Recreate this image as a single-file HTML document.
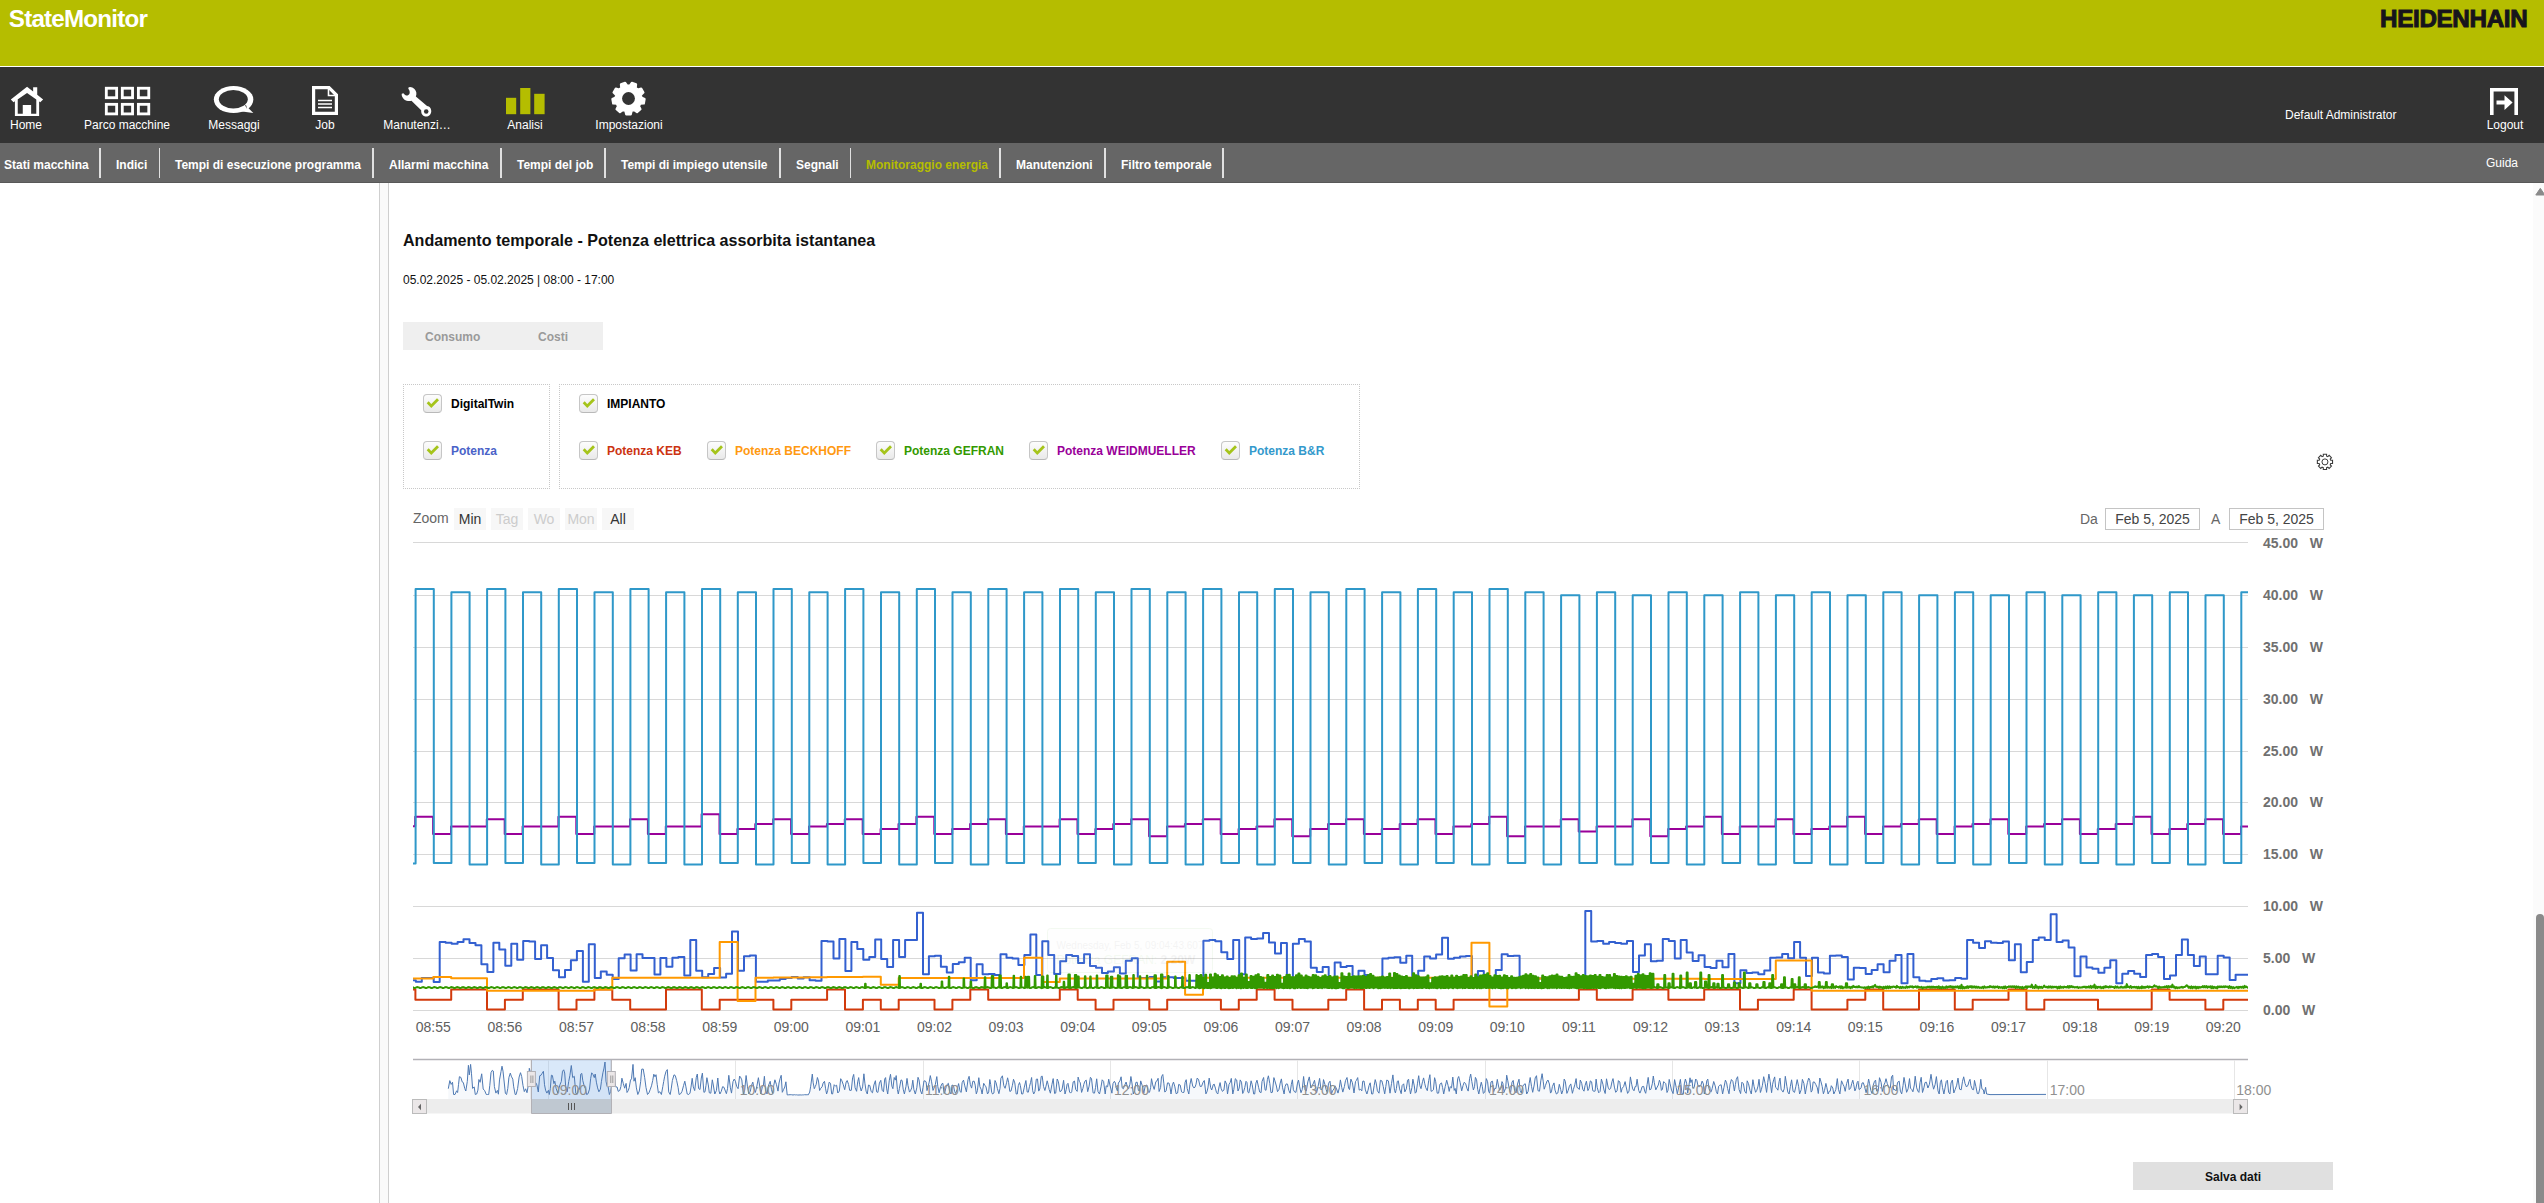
<!DOCTYPE html>
<html lang="it"><head><meta charset="utf-8"><title>StateMonitor</title>
<style>
*{box-sizing:border-box;margin:0;padding:0}
html,body{width:2544px;height:1203px;overflow:hidden;background:#fff}
body{font-family:"Liberation Sans",Arial,sans-serif;font-size:12px;color:#000;position:relative}
.abs{position:absolute}
#top{left:0;top:0;width:2544px;height:66px;background:#b5bd00}
#top .app{left:8.8px;top:5.4px;font-size:24.2px;font-weight:bold;color:#fff;line-height:28px;white-space:nowrap;letter-spacing:-0.8px}
#top .logo{right:16.7px;top:4px;font-size:24.2px;font-weight:bold;color:#17141c;line-height:30px;letter-spacing:-0.33px;white-space:nowrap;-webkit-text-stroke:1px #17141c}
#nav{left:0;top:67px;width:2544px;height:76px;background:#333}
.ni{position:absolute;top:0;height:76px;color:#fff;font-size:12px;text-align:center;white-space:nowrap}
.ni span{position:absolute;left:50%;transform:translateX(-50%);top:51px;line-height:15px}
.ni svg{position:absolute;display:block}
#sub{left:0;top:143px;width:2544px;height:40px;background:#666;border-bottom:1px solid #585858}
#sub .it{position:absolute;top:1px;height:40px;line-height:42px;color:#fff;font-weight:bold;font-size:12px;white-space:nowrap}
#sub .sep{position:absolute;top:5px;width:1.15px;height:30px;background:#e0e0e0}
#sub .on{color:#b5bd00}
#split{left:379px;top:183px;width:10px;height:1020px;background:#fafafa;border-left:1px solid #cfcfcf;border-right:1px solid #cfcfcf}
h1{position:absolute;left:403px;top:230px;font-size:16.1px;font-weight:bold;line-height:20px;white-space:nowrap;color:#111}
.dt{left:403px;top:273px;font-size:12px;line-height:15px;white-space:nowrap;color:#111}
.tabs{left:403px;top:322px;width:200px;height:28px;background:#efefef;color:#9a9a9a;font-weight:bold;font-size:12px;line-height:31px}
.tabs span{position:absolute;top:0}
.box{border:1px dotted #c8c8c8;top:384px;height:105px}
.cb{position:absolute;width:19px;height:19px;border:1px solid #c6c6c6;border-bottom-color:#b9b9b9;border-radius:4px;background:linear-gradient(#fdfdfd,#e9e9e9)}
.cb svg{position:absolute;left:0;top:0}
.lb{position:absolute;margin-top:1px;font-weight:bold;font-size:12px;line-height:15px;white-space:nowrap}
.zb{position:absolute;top:508px;width:32px;height:22px;background:#f7f7f7;font-size:14px;line-height:22px;text-align:center;color:#333}
.zb.d{color:#ccc}
.inp{position:absolute;top:508px;width:95px;height:22px;border:1px solid #c4c4c4;font-size:14px;line-height:21px;text-align:center;color:#444;background:#fff}
.save{left:2133px;top:1162px;width:200px;height:28px;background:#e0e0e0;font-weight:bold;font-size:12px;line-height:31px;text-align:center;color:#111}
#sbar{left:2533px;top:183px;width:11px;height:1020px;background:#fbfbfb}
#sthumb{left:2536px;top:914px;width:8px;height:300px;background:#8a8a8a;border-radius:4px}
</style></head><body>
<div id="top" class="abs"><div class="abs app">StateMonitor</div><div class="abs logo">HEIDENHAIN</div></div>
<div id="nav" class="abs"><div class="ni" style="left:-54px;width:160px;color:#fff"><svg width="160" height="60" viewBox="0 0 2544 954" style="left:54px;top:9px"><path d="M430 170 L172 375 L215 418 L430 270 L640 418 L686 375 L592 298 V180 H527 V248 Z" fill="#fff"/><path d="M237 395 V636 H622 V395 L577 365 V600 H495 V462 H362 V600 H282 V365 Z" fill="#fff"/></svg><span>Home</span></div><div class="ni" style="left:47px;width:160px;color:#fff"><svg width="160" height="60" viewBox="0 0 2544 954" style="left:-47px;top:9px"><rect x="1690.5" y="194.5" width="164" height="151" fill="none" stroke="#fff" stroke-width="45"/><rect x="1944.5" y="194.5" width="163" height="151" fill="none" stroke="#fff" stroke-width="45"/><rect x="2200.5" y="194.5" width="165" height="151" fill="none" stroke="#fff" stroke-width="45"/><rect x="1690.5" y="450.5" width="164" height="152" fill="none" stroke="#fff" stroke-width="45"/><rect x="1944.5" y="450.5" width="163" height="152" fill="none" stroke="#fff" stroke-width="45"/><rect x="2200.5" y="450.5" width="165" height="152" fill="none" stroke="#fff" stroke-width="45"/></svg><span>Parco macchine</span></div><div class="ni" style="left:154px;width:160px;color:#fff"><svg width="160" height="60" viewBox="0 0 2544 954" style="left:46px;top:9px"><ellipse cx="534" cy="374" rx="314" ry="216" fill="#fff"/><path d="M700 440 L848 590 L640 560 Z" fill="#fff"/><ellipse cx="530" cy="370" rx="230" ry="146" fill="#333"/><path d="M712 462 L748 522 L735 470 Z" fill="#333"/></svg><span>Messaggi</span></div><div class="ni" style="left:245px;width:160px;color:#fff"><svg width="26" height="29" viewBox="0 0 26 29" style="left:67px;top:19.200000000000003px"><path d="M1.6 1.6 H17 L24.4 9 V27.4 H1.6 Z" fill="none" stroke="#fff" stroke-width="3.2"/><path d="M16.5 1.6 V9.5 H24.4" fill="none" stroke="#fff" stroke-width="1.6"/><path d="M6 14.5 H20 M6 18 H20 M6 21.5 H20" stroke="#fff" stroke-width="1.3"/></svg><span>Job</span></div><div class="ni" style="left:337px;width:160px;color:#fff"><svg width="160" height="60" viewBox="0 0 2544 954" style="left:43px;top:9px"><path d="M450 185 C470 166 520 178 548 208 C580 240 588 290 570 325 L748 478 C790 480 818 520 815 565 C812 615 770 648 730 645 C690 642 655 610 655 560 L655 545 L500 395 C470 402 420 402 385 372 C355 345 338 310 346 283 L372 273 C395 300 420 318 445 308 C480 290 482 240 452 207 Z" fill="#fff"/><circle cx="735" cy="565" r="36" fill="#333"/></svg><span>Manutenzi&hellip;</span></div><div class="ni" style="left:445px;width:160px;color:#fff"><svg width="39" height="27" viewBox="0 0 39 27" style="left:60.80000000000001px;top:21px"><rect x="0" y="9.8" width="10.2" height="16.4" fill="#b5bd00"/><rect x="14.2" y="0" width="10.2" height="26.2" fill="#b5bd00"/><rect x="28.2" y="5.8" width="10.4" height="20.4" fill="#b5bd00"/></svg><span>Analisi</span></div><div class="ni" style="left:549px;width:160px;color:#fff"><svg width="37" height="37" viewBox="0 0 37 37" style="left:61px;top:13px"><path d="M21.62 31.02L20.74 34.44L16.26 34.44L15.38 31.02L12.85 30.09L9.97 32.15L6.54 29.27L8.06 26.08L6.72 23.75L3.19 23.48L2.41 19.06L5.63 17.60L6.10 14.94L3.57 12.47L5.81 8.59L9.22 9.54L11.29 7.81L10.94 4.28L15.15 2.75L17.15 5.67L19.85 5.67L21.85 2.75L26.06 4.28L25.71 7.81L27.78 9.54L31.19 8.59L33.43 12.47L30.90 14.94L31.37 17.60L34.59 19.06L33.81 23.48L30.28 23.75L28.94 26.08L30.46 29.27L27.03 32.15L24.15 30.09Z" fill="#fff" stroke="#fff" stroke-width="2.2" stroke-linejoin="round"/><circle cx="18.5" cy="18.5" r="6.4" fill="#333"/></svg><span>Impostazioni</span></div><div class="ni" style="left:2425px;width:160px;color:#fff"><svg width="28" height="27" viewBox="0 0 28 27" style="left:65.30000000000018px;top:21px"><path d="M1.8 27 V1.8 H26.2 V27" fill="none" stroke="#fff" stroke-width="3.6"/><path d="M6.5 12.6 H14.5 V7.2 L22.6 14.6 L14.5 22 V16.6 H6.5 Z" fill="#fff"/></svg><span>Logout</span></div><div class="abs" style="left:2285px;top:41px;color:#fff;font-size:12px;line-height:15px;white-space:nowrap">Default Administrator</div></div>
<div id="sub" class="abs"><div class="it" style="left:4px">Stati macchina</div><div class="it" style="left:116px">Indici</div><div class="it" style="left:175px">Tempi di esecuzione programma</div><div class="it" style="left:389px">Allarmi macchina</div><div class="it" style="left:517px">Tempi del job</div><div class="it" style="left:621px">Tempi di impiego utensile</div><div class="it" style="left:796px">Segnali</div><div class="it on" style="left:866px">Monitoraggio energia</div><div class="it" style="left:1016px">Manutenzioni</div><div class="it" style="left:1121px">Filtro temporale</div><div class="sep" style="left:99.45px"></div><div class="sep" style="left:158.75px"></div><div class="sep" style="left:372.45px"></div><div class="sep" style="left:500.45px"></div><div class="sep" style="left:604.45px"></div><div class="sep" style="left:779.45px"></div><div class="sep" style="left:849.95px"></div><div class="sep" style="left:999.45px"></div><div class="sep" style="left:1104.45px"></div><div class="sep" style="left:1222.45px"></div><div class="it" style="left:2486px;font-weight:normal;line-height:39px">Guida</div></div>
<div id="split" class="abs"></div>
<div id="sbar" class="abs"></div><div id="sthumb" class="abs"></div>
<h1>Andamento temporale - Potenza elettrica assorbita istantanea</h1>
<div class="abs dt">05.02.2025 - 05.02.2025 | 08:00 - 17:00</div>
<div class="abs tabs"><span style="left:22px">Consumo</span><span style="left:135px">Costi</span></div>
<div class="abs box" style="left:403px;width:147px"></div><div class="abs box" style="left:559px;width:801px"></div><div class="cb" style="left:423px;top:394px"><svg width="17" height="17" viewBox="1 1 17 17"><path d="M4.7 8.3 L8.3 12.1 L15 5.3" fill="none" stroke="#a5c41a" stroke-width="2.8" stroke-linecap="butt" stroke-linejoin="miter"/></svg></div><div class="lb" style="left:451px;top:396px;color:#000">DigitalTwin</div><div class="cb" style="left:423px;top:441px"><svg width="17" height="17" viewBox="1 1 17 17"><path d="M4.7 8.3 L8.3 12.1 L15 5.3" fill="none" stroke="#a5c41a" stroke-width="2.8" stroke-linecap="butt" stroke-linejoin="miter"/></svg></div><div class="lb" style="left:451px;top:443px;color:#4a62c8">Potenza</div><div class="cb" style="left:579px;top:394px"><svg width="17" height="17" viewBox="1 1 17 17"><path d="M4.7 8.3 L8.3 12.1 L15 5.3" fill="none" stroke="#a5c41a" stroke-width="2.8" stroke-linecap="butt" stroke-linejoin="miter"/></svg></div><div class="lb" style="left:607px;top:396px;color:#000">IMPIANTO</div><div class="cb" style="left:579px;top:441px"><svg width="17" height="17" viewBox="1 1 17 17"><path d="M4.7 8.3 L8.3 12.1 L15 5.3" fill="none" stroke="#a5c41a" stroke-width="2.8" stroke-linecap="butt" stroke-linejoin="miter"/></svg></div><div class="lb" style="left:607px;top:443px;color:#cc3311">Potenza KEB</div><div class="cb" style="left:707px;top:441px"><svg width="17" height="17" viewBox="1 1 17 17"><path d="M4.7 8.3 L8.3 12.1 L15 5.3" fill="none" stroke="#a5c41a" stroke-width="2.8" stroke-linecap="butt" stroke-linejoin="miter"/></svg></div><div class="lb" style="left:735px;top:443px;color:#ff9911">Potenza BECKHOFF</div><div class="cb" style="left:876px;top:441px"><svg width="17" height="17" viewBox="1 1 17 17"><path d="M4.7 8.3 L8.3 12.1 L15 5.3" fill="none" stroke="#a5c41a" stroke-width="2.8" stroke-linecap="butt" stroke-linejoin="miter"/></svg></div><div class="lb" style="left:904px;top:443px;color:#339900">Potenza GEFRAN</div><div class="cb" style="left:1029px;top:441px"><svg width="17" height="17" viewBox="1 1 17 17"><path d="M4.7 8.3 L8.3 12.1 L15 5.3" fill="none" stroke="#a5c41a" stroke-width="2.8" stroke-linecap="butt" stroke-linejoin="miter"/></svg></div><div class="lb" style="left:1057px;top:443px;color:#990099">Potenza WEIDMUELLER</div><div class="cb" style="left:1221px;top:441px"><svg width="17" height="17" viewBox="1 1 17 17"><path d="M4.7 8.3 L8.3 12.1 L15 5.3" fill="none" stroke="#a5c41a" stroke-width="2.8" stroke-linecap="butt" stroke-linejoin="miter"/></svg></div><div class="lb" style="left:1249px;top:443px;color:#3399cc">Potenza B&amp;R</div>
<div class="abs" style="left:413px;top:508px;font-size:14px;line-height:21px;color:#666">Zoom</div><div class="zb" style="left:454px">Min</div><div class="zb d" style="left:491px">Tag</div><div class="zb d" style="left:528px">Wo</div><div class="zb d" style="left:565px">Mon</div><div class="zb" style="left:602px">All</div><div class="abs" style="left:2080px;top:508px;font-size:14px;line-height:22px;color:#666">Da</div><div class="inp" style="left:2105px">Feb 5, 2025</div><div class="abs" style="left:2211px;top:508px;font-size:14px;line-height:22px;color:#666">A</div><div class="inp" style="left:2229px">Feb 5, 2025</div>
<svg class="abs" style="left:0;top:0" width="2544" height="1203" viewBox="0 0 2544 1203" font-family="Liberation Sans, Arial, sans-serif">
<path d="M413 1010.5H2248" stroke="#d8d8d8" stroke-width="1" fill="none"/>
<text x="2263" y="1014.9" font-size="14" font-weight="bold" fill="#707070" xml:space="preserve">0.00   W</text>
<path d="M413 958.5H2248" stroke="#d8d8d8" stroke-width="1" fill="none"/>
<text x="2263" y="962.9" font-size="14" font-weight="bold" fill="#707070" xml:space="preserve">5.00   W</text>
<path d="M413 906.5H2248" stroke="#d8d8d8" stroke-width="1" fill="none"/>
<text x="2263" y="910.9" font-size="14" font-weight="bold" fill="#707070" xml:space="preserve">10.00   W</text>
<path d="M413 854.5H2248" stroke="#d8d8d8" stroke-width="1" fill="none"/>
<text x="2263" y="858.9" font-size="14" font-weight="bold" fill="#707070" xml:space="preserve">15.00   W</text>
<path d="M413 802.5H2248" stroke="#d8d8d8" stroke-width="1" fill="none"/>
<text x="2263" y="806.9" font-size="14" font-weight="bold" fill="#707070" xml:space="preserve">20.00   W</text>
<path d="M413 751.5H2248" stroke="#d8d8d8" stroke-width="1" fill="none"/>
<text x="2263" y="755.9" font-size="14" font-weight="bold" fill="#707070" xml:space="preserve">25.00   W</text>
<path d="M413 699.5H2248" stroke="#d8d8d8" stroke-width="1" fill="none"/>
<text x="2263" y="703.9" font-size="14" font-weight="bold" fill="#707070" xml:space="preserve">30.00   W</text>
<path d="M413 647.5H2248" stroke="#d8d8d8" stroke-width="1" fill="none"/>
<text x="2263" y="651.9" font-size="14" font-weight="bold" fill="#707070" xml:space="preserve">35.00   W</text>
<path d="M413 595.5H2248" stroke="#d8d8d8" stroke-width="1" fill="none"/>
<text x="2263" y="599.9" font-size="14" font-weight="bold" fill="#707070" xml:space="preserve">40.00   W</text>
<path d="M413 542.5H2248" stroke="#d8d8d8" stroke-width="1" fill="none"/>
<text x="2263" y="547.5" font-size="14" font-weight="bold" fill="#707070" xml:space="preserve">45.00   W</text>
<text x="433.3" y="1032" font-size="14" fill="#606060" text-anchor="middle">08:55</text>
<text x="504.9" y="1032" font-size="14" fill="#606060" text-anchor="middle">08:56</text>
<text x="576.5" y="1032" font-size="14" fill="#606060" text-anchor="middle">08:57</text>
<text x="648.1" y="1032" font-size="14" fill="#606060" text-anchor="middle">08:58</text>
<text x="719.7" y="1032" font-size="14" fill="#606060" text-anchor="middle">08:59</text>
<text x="791.3" y="1032" font-size="14" fill="#606060" text-anchor="middle">09:00</text>
<text x="862.9" y="1032" font-size="14" fill="#606060" text-anchor="middle">09:01</text>
<text x="934.5" y="1032" font-size="14" fill="#606060" text-anchor="middle">09:02</text>
<text x="1006.1" y="1032" font-size="14" fill="#606060" text-anchor="middle">09:03</text>
<text x="1077.7" y="1032" font-size="14" fill="#606060" text-anchor="middle">09:04</text>
<text x="1149.3" y="1032" font-size="14" fill="#606060" text-anchor="middle">09:05</text>
<text x="1220.9" y="1032" font-size="14" fill="#606060" text-anchor="middle">09:06</text>
<text x="1292.5" y="1032" font-size="14" fill="#606060" text-anchor="middle">09:07</text>
<text x="1364.1" y="1032" font-size="14" fill="#606060" text-anchor="middle">09:08</text>
<text x="1435.7" y="1032" font-size="14" fill="#606060" text-anchor="middle">09:09</text>
<text x="1507.3" y="1032" font-size="14" fill="#606060" text-anchor="middle">09:10</text>
<text x="1578.9" y="1032" font-size="14" fill="#606060" text-anchor="middle">09:11</text>
<text x="1650.5" y="1032" font-size="14" fill="#606060" text-anchor="middle">09:12</text>
<text x="1722.1" y="1032" font-size="14" fill="#606060" text-anchor="middle">09:13</text>
<text x="1793.7" y="1032" font-size="14" fill="#606060" text-anchor="middle">09:14</text>
<text x="1865.3" y="1032" font-size="14" fill="#606060" text-anchor="middle">09:15</text>
<text x="1936.9" y="1032" font-size="14" fill="#606060" text-anchor="middle">09:16</text>
<text x="2008.5" y="1032" font-size="14" fill="#606060" text-anchor="middle">09:17</text>
<text x="2080.1" y="1032" font-size="14" fill="#606060" text-anchor="middle">09:18</text>
<text x="2151.7" y="1032" font-size="14" fill="#606060" text-anchor="middle">09:19</text>
<text x="2223.3" y="1032" font-size="14" fill="#606060" text-anchor="middle">09:20</text>
<clipPath id="cp"><rect x="413" y="540" width="1835" height="475"/></clipPath>
<g clip-path="url(#cp)" fill="none" stroke-linejoin="round" stroke-linecap="round">
<path d="M413.0 980.2H415.8 V981.8H421.8 V977.9H427.7 V977.9H433.7 V982.0H439.7 V941.9H445.6 V942.7H451.6 V943.7H457.6 V941.9H463.5 V939.3H469.5 V943.1H475.5 V945.2H481.4 V964.3H487.4 V972.0H493.4 V942.7H499.3 V949.6H505.3 V965.8H511.3 V943.7H517.2 V959.8H523.2 V940.9H529.2 V941.5H535.1 V959.0H541.1 V945.2H547.1 V958.0H553.0 V970.2H559.0 V977.3H565.0 V970.0H570.9 V960.2H576.9 V951.1H582.9 V981.8H588.8 V944.2H594.8 V978.1H600.8 V971.4H606.7 V974.7H612.7 V979.0H618.7 V958.2H624.6 V954.6H630.6 V970.5H636.6 V954.3H642.5 V958.0H648.5 V958.0H654.5 V974.6H660.4 V958.0H666.4 V966.7H672.4 V957.8H678.3 V957.0H684.3 V975.5H690.3 V940.1H696.2 V970.8H702.2 V977.3H708.2 V974.0H714.1 V968.1H720.1 V977.5H726.1 V973.7H732.0 V931.5H738.0 V970.8H744.0 V956.3H749.9 V955.5H755.9 V981.8H761.9 V981.8H767.8 V980.6H773.8 V980.6H779.8 V979.0H785.7 V977.9H791.7 V977.0H797.7 V978.5H803.6 V977.3H809.6 V980.2H815.6 V980.8H821.5 V940.9H827.5 V941.5H833.5 V958.4H839.4 V938.9H845.4 V971.1H851.4 V942.1H857.3 V949.0H863.3 V959.8H869.3 V957.0H875.2 V939.5H881.2 V959.0H887.2 V966.9H893.1 V940.1H899.1 V957.0H905.1 V940.1H911.0 V940.1H917.0 V912.8H923.0 V974.3H928.9 V956.3H934.9 V955.7H940.9 V966.7H946.8 V972.6H952.8 V964.1H958.8 V962.2H964.7 V957.8H970.7 V980.2H976.7 V964.3H982.6 V974.3H988.6 V974.0H994.6 V975.1H1000.5 V954.3H1006.5 V957.8H1012.5 V958.4H1018.4 V964.9H1024.4 V954.9H1030.4 V934.6H1036.3 V974.9H1042.3 V941.3H1048.3 V954.9H1054.2 V974.0H1060.2 V961.3H1066.2 V954.9H1072.1 V956.0H1078.1 V962.9H1084.1 V954.3H1090.0 V966.1H1096.0 V967.8H1102.0 V973.1H1107.9 V971.6H1113.9 V967.2H1119.9 V973.5H1125.8 V960.8H1131.8 V958.2H1137.8 V977.9H1143.7 V977.9H1149.7 V977.0H1155.7 V981.4H1161.6 V977.3H1167.6 V977.3H1173.6 V977.9H1179.5 V977.9H1185.5 V980.8H1191.5 V980.8H1197.4 V979.6H1203.4 V940.7H1209.4 V940.1H1215.3 V941.3H1221.3 V952.3H1227.3 V959.0H1233.2 V940.1H1239.2 V974.3H1245.2 V937.4H1251.1 V938.9H1257.1 V938.6H1263.1 V933.0H1269.0 V942.5H1275.0 V953.4H1281.0 V943.1H1286.9 V978.5H1292.9 V943.7H1298.9 V938.9H1304.8 V941.5H1310.8 V967.8H1316.8 V972.0H1322.7 V966.9H1328.7 V978.5H1334.7 V962.5H1340.6 V966.9H1346.6 V966.1H1352.6 V978.5H1358.5 V970.8H1364.5 V974.9H1370.5 V978.5H1376.4 V978.5H1382.4 V958.4H1388.4 V957.8H1394.3 V957.2H1400.3 V962.8H1406.3 V955.7H1412.2 V978.5H1418.2 V970.8H1424.2 V956.6H1430.1 V958.6H1436.1 V954.5H1442.1 V937.8H1448.0 V958.8H1454.0 V957.8H1460.0 V956.6H1465.9 V956.0H1471.9 V978.5H1477.9 V971.1H1483.8 V978.5H1489.8 V978.5H1495.8 V970.0H1501.7 V954.3H1507.7 V956.0H1513.7 V955.8H1519.6 V978.5H1525.6 V978.5H1531.6 V978.5H1537.5 V978.5H1543.5 V978.5H1549.5 V978.5H1555.4 V978.5H1561.4 V978.5H1567.4 V978.5H1573.3 V978.5H1579.3 V978.5H1585.3 V911.0H1591.2 V941.5H1597.2 V941.1H1603.2 V943.7H1609.1 V942.1H1615.1 V943.1H1621.1 V943.7H1627.0 V940.9H1633.0 V972.0H1639.0 V955.5H1644.9 V944.2H1650.9 V961.3H1656.9 V960.8H1662.8 V938.9H1668.8 V940.9H1674.8 V958.4H1680.7 V940.1H1686.7 V952.5H1692.7 V961.1H1698.6 V955.2H1704.6 V967.0H1710.6 V968.1H1716.5 V960.8H1722.5 V967.2H1728.5 V953.9H1734.4 V983.2H1740.4 V970.2H1746.4 V973.1H1752.3 V972.6H1758.3 V974.3H1764.3 V970.5H1770.2 V957.8H1776.2 V957.6H1782.2 V954.0H1788.1 V958.2H1794.1 V942.1H1800.1 V957.8H1806.0 V976.1H1812.0 V957.8H1818.0 V972.6H1823.9 V973.5H1829.9 V955.7H1835.9 V955.5H1841.8 V956.9H1847.8 V979.4H1853.8 V967.8H1859.7 V968.1H1865.7 V974.0H1871.7 V970.0H1877.6 V964.3H1883.6 V972.3H1889.6 V960.8H1895.5 V955.1H1901.5 V983.2H1907.5 V954.0H1913.4 V977.3H1919.4 V980.8H1925.4 V981.2H1931.3 V979.0H1937.3 V978.2H1943.3 V980.6H1949.2 V980.2H1955.2 V977.9H1961.2 V978.8H1967.1 V940.1H1973.1 V942.7H1979.1 V948.0H1985.0 V941.3H1991.0 V942.7H1997.0 V943.1H2002.9 V941.5H2008.9 V960.2H2014.9 V944.2H2020.8 V972.2H2026.8 V961.9H2032.8 V940.1H2038.7 V937.5H2044.7 V939.9H2050.7 V914.2H2056.6 V941.9H2062.6 V940.4H2068.6 V947.4H2074.5 V976.3H2080.5 V956.4H2086.5 V967.5H2092.4 V968.7H2098.4 V972.8H2104.4 V967.8H2110.3 V960.2H2116.3 V983.2H2122.3 V973.7H2128.2 V971.0H2134.2 V973.7H2140.2 V976.9H2146.1 V954.9H2152.1 V954.0H2158.1 V956.9H2164.0 V979.0H2170.0 V975.5H2176.0 V954.9H2181.9 V939.5H2187.9 V954.9H2193.9 V966.1H2199.8 V956.6H2205.8 V974.3H2211.8 V974.3H2217.7 V955.8H2223.7 V957.5H2229.7 V979.9H2235.6 V974.7H2241.6 V974.7H2247.6 V974.7H2248.0" stroke="#3360d0" stroke-width="2"/>
<path d="M413.0 989.6H415.4 V999.7H433.3 V999.7H451.2 V989.6H469.1 V989.6H487.0 V1009.5H504.9 V999.7H522.8 V989.6H540.7 V989.6H558.6 V1009.5H576.5 V999.7H594.4 V989.6H612.3 V999.7H630.2 V1009.5H648.1 V1009.5H666.0 V989.6H683.9 V989.6H701.8 V1009.5H719.7 V999.7H737.6 V999.7H755.5 V999.7H773.4 V1009.5H791.3 V999.7H809.2 V999.7H827.1 V989.6H845.0 V1009.5H862.9 V999.7H880.8 V1009.5H898.7 V999.7H916.6 V999.7H934.5 V1009.5H952.4 V999.7H970.3 V989.6H988.2 V999.7H1006.1 V999.7H1024.0 V999.7H1041.9 V999.7H1059.8 V989.6H1077.7 V999.7H1095.6 V1009.5H1113.5 V999.7H1131.4 V999.7H1149.3 V1009.5H1167.2 V999.7H1185.1 V999.7H1203.0 V999.7H1220.9 V1009.5H1238.8 V999.7H1256.7 V989.6H1274.6 V999.7H1292.5 V1009.5H1310.4 V1009.5H1328.3 V999.7H1346.2 V989.6H1364.1 V1009.5H1382.0 V999.7H1399.9 V1009.5H1417.8 V999.7H1435.7 V1009.5H1453.6 V999.7H1471.5 V999.7H1489.4 V999.7H1507.3 V999.7H1525.2 V999.7H1543.1 V999.7H1561.0 V999.7H1578.9 V989.6H1596.8 V999.7H1614.7 V999.7H1632.6 V989.6H1650.5 V989.6H1668.4 V999.7H1686.3 V999.7H1704.2 V989.6H1722.1 V989.6H1740.0 V1009.5H1757.9 V999.7H1775.8 V999.7H1793.7 V989.6H1811.6 V1009.5H1829.5 V1009.5H1847.4 V999.7H1865.3 V989.6H1883.2 V1009.5H1901.1 V1009.5H1919.0 V989.6H1936.9 V989.6H1954.8 V1009.5H1972.7 V999.7H1990.6 V999.7H2008.5 V989.6H2026.4 V1009.5H2044.3 V999.7H2062.2 V999.7H2080.1 V999.7H2098.0 V1009.5H2115.9 V1009.5H2133.8 V1009.5H2151.7 V989.6H2169.6 V999.7H2187.5 V999.7H2205.4 V1009.5H2223.3 V999.7H2241.2 V999.7H2248.0" stroke="#d23a0c" stroke-width="2"/>
<path d="M413.0 978.6H415.4 V978.6H433.3 V977.1H451.2 V978.2H469.1 V978.2H487.0 V990.8H504.9 V990.8H522.8 V990.8H540.7 V990.8H558.6 V990.8H576.5 V990.8H594.4 V989.5H612.3 V977.8H630.2 V977.8H648.1 V977.8H666.0 V977.8H683.9 V977.8H701.8 V977.8H719.7 V941.9H737.6 V1000.9H755.5 V977.8H773.4 V977.6H791.3 V977.4H809.2 V977.3H827.1 V977.1H845.0 V976.9H862.9 V976.7H880.8 V984.7H898.7 V978.1H916.6 V978.1H934.5 V978.1H952.4 V978.1H970.3 V978.1H988.2 V978.1H1006.1 V978.1H1024.0 V957.8H1041.9 V982.0H1059.8 V978.4H1077.7 V978.4H1095.6 V978.4H1113.5 V978.4H1131.4 V978.4H1149.3 V978.4H1167.2 V961.7H1185.1 V994.7H1203.0 V977.8H1220.9 V977.8H1238.8 V977.8H1256.7 V977.8H1274.6 V977.8H1292.5 V977.8H1310.4 V977.8H1328.3 V977.8H1346.2 V977.8H1364.1 V977.8H1382.0 V977.8H1399.9 V977.8H1417.8 V977.8H1435.7 V977.8H1453.6 V977.8H1471.5 V942.8H1489.4 V1006.6H1507.3 V978.3H1525.2 V978.4H1543.1 V978.4H1561.0 V978.5H1578.9 V978.5H1596.8 V978.6H1614.7 V978.6H1632.6 V978.7H1650.5 V978.7H1668.4 V978.8H1686.3 V978.8H1704.2 V978.9H1722.1 V979.0H1740.0 V979.0H1757.9 V979.1H1775.8 V960.5H1793.7 V960.5H1811.6 V990.8H1829.5 V990.8H1847.4 V990.8H1865.3 V990.8H1883.2 V990.8H1901.1 V990.8H1919.0 V990.8H1936.9 V990.8H1954.8 V990.8H1972.7 V990.8H1990.6 V990.8H2008.5 V990.8H2026.4 V990.8H2044.3 V990.8H2062.2 V990.8H2080.1 V990.8H2098.0 V990.8H2115.9 V990.8H2133.8 V990.8H2151.7 V990.8H2169.6 V990.8H2187.5 V990.8H2205.4 V990.8H2223.3 V990.8H2241.2 V990.8H2248.0" stroke="#ff9900" stroke-width="2"/>
<path d="M413.0 987.4L413.9 987.9L414.9 988.1L415.8 987.7L416.8 987.2L417.7 987.1L418.7 987.4L419.6 987.9L420.6 988.1L421.5 987.7L422.5 987.2L423.4 987.1L424.4 987.4L425.3 987.9L426.3 988.1L427.2 987.7L428.2 987.2L429.1 987.1L430.1 987.4L431.0 987.9L432.0 988.1L432.9 987.7L433.9 987.2L434.8 987.1L435.8 987.4L436.7 987.9L437.7 988.1L438.6 987.7L439.6 987.2L440.5 987.1L441.5 987.4L442.4 987.9L443.4 988.1L444.3 987.7L445.3 987.2L446.2 987.1L447.2 987.4L448.1 987.9L449.1 988.1L450.0 987.7L451.0 987.2L451.9 987.1L452.9 987.4L453.8 987.9L454.8 988.1L455.7 987.7L456.7 987.2L457.6 987.1L458.6 987.4L459.5 987.9L460.5 988.1L461.4 987.7L462.4 987.2L463.3 987.1L464.3 987.4L465.2 987.9L466.2 988.1L467.1 987.7L468.1 987.2L469.0 987.1L470.0 987.4L470.9 987.9L471.9 988.1L472.8 987.7L473.8 987.2L474.7 987.1L475.7 987.4L476.6 987.9L477.6 988.1L478.5 987.7L479.5 987.2L480.4 987.1L481.4 987.4L482.3 987.9L483.3 988.1L484.2 987.7L485.2 987.2L486.1 987.1L487.1 987.4L488.0 987.9L489.0 988.1L489.9 987.7L490.9 987.2L491.8 987.1L492.8 987.4L493.7 987.9L494.7 988.1L495.6 987.7L496.6 987.2L497.5 987.1L498.5 987.4L499.4 987.9L500.4 988.1L501.3 987.7L502.3 987.2L503.2 987.1L504.2 987.4L505.1 987.9L506.1 988.1L507.0 987.7L508.0 987.2L508.9 987.1L509.9 987.4L510.8 987.9L511.8 988.1L512.7 987.7L513.7 987.2L514.6 987.1L515.6 987.4L516.5 987.9L517.5 988.1L518.4 987.7L519.4 987.2L520.3 987.1L521.3 987.4L522.2 987.9L523.2 988.1L524.1 987.7L525.1 987.2L526.0 987.1L527.0 987.4L527.9 987.9L528.9 988.1L529.8 987.7L530.8 987.2L531.7 987.1L532.7 987.4L533.6 987.9L534.6 988.1L535.5 987.7L536.5 987.2L537.5 987.1L538.4 987.4L539.4 987.9L540.3 988.1L541.3 987.7L542.2 987.2L543.2 987.1L544.1 987.4L545.1 987.9L546.0 988.1L547.0 987.7L547.9 987.2L548.9 987.1L549.8 987.4L550.8 987.9L551.7 988.1L552.7 987.7L553.6 987.2L554.6 987.1L555.5 987.4L556.5 987.9L557.4 988.1L558.4 987.7L559.3 987.2L560.3 987.1L561.2 987.4L562.2 987.9L563.1 988.1L564.1 987.7L565.0 987.2L566.0 987.1L566.9 987.4L567.9 987.9L568.8 988.1L569.8 987.7L570.7 987.2L571.7 987.1L572.6 987.4L573.6 987.9L574.5 988.1L575.5 987.7L576.4 987.2L577.4 987.1L578.3 987.4L579.3 987.9L580.2 988.1L581.2 987.7L582.1 987.2L583.1 987.1L584.0 987.4L585.0 987.9L585.9 988.1L586.9 987.7L587.8 987.2L588.8 987.1L589.7 987.4L590.7 987.9L591.6 988.1L592.6 987.7L593.5 987.2L594.5 987.1L595.4 987.4L596.4 987.9L597.3 988.1L598.3 987.7L599.2 987.2L600.2 987.1L601.1 987.4L602.1 987.9L603.0 988.1L604.0 987.7L604.9 987.2L605.9 987.1L606.8 987.4L607.8 987.9L608.7 988.1L609.7 987.7L610.6 987.2L611.6 987.1L612.5 987.4L613.5 987.9L614.4 988.1L615.4 987.7L616.3 987.2L617.3 987.1L618.2 987.4L619.2 987.9L620.1 988.1L621.1 987.7L622.0 987.2L623.0 987.1L623.9 987.4L624.9 987.9L625.8 988.1L626.8 987.7L627.7 987.2L628.7 987.1L629.6 987.4L630.6 987.9L631.5 988.1L632.5 987.7L633.4 987.2L634.4 987.1L635.3 987.4L636.3 987.9L637.2 988.1L638.2 987.7L639.1 987.2L640.1 987.1L641.0 987.4L642.0 987.9L642.9 988.1L643.9 987.7L644.8 987.2L645.8 987.1L646.7 987.4L647.7 987.9L648.6 988.1L649.6 987.7L650.5 987.2L651.5 987.1L652.4 987.4L653.4 987.9L654.3 988.1L655.3 987.7L656.2 987.2L657.2 987.1L658.1 987.4L659.1 987.9L660.0 988.1L661.0 987.7L661.9 987.2L662.9 987.1L663.8 987.4L664.8 987.9L665.7 988.1L666.7 987.7L667.6 987.2L668.6 987.1L669.5 987.4L670.5 987.9L671.4 988.1L672.4 987.7L673.3 987.2L674.3 987.1L675.2 987.4L676.2 987.9L677.1 988.1L678.1 987.7L679.0 987.2L680.0 987.1L680.9 987.4L681.9 987.9L682.8 988.1L683.8 987.7L684.7 987.2L685.7 987.1L686.6 987.4L687.6 987.9L688.5 988.1L689.5 987.7L690.4 987.2L691.4 987.1L692.3 987.4L693.3 987.9L694.2 988.1L695.2 987.7L696.1 987.2L697.1 987.1L698.0 987.4L699.0 987.9L699.9 988.1L700.9 987.7L701.8 987.2L702.8 987.1L703.7 987.4L704.7 987.9L705.6 988.1L706.6 987.7L707.5 987.2L708.5 987.1L709.4 987.4L710.4 987.9L711.3 988.1L712.3 987.7L713.2 987.2L714.2 987.1L715.1 987.4L716.1 987.9L717.0 988.1L718.0 987.7L718.9 987.2L719.9 987.1L720.8 987.4L721.8 987.9L722.7 988.1L723.7 987.7L724.6 987.2L725.6 987.1L726.5 987.4L727.5 987.9L728.4 988.1L729.4 987.7L730.3 987.2L731.3 987.1L732.2 987.4L733.2 987.9L734.1 988.1L735.1 987.7L736.0 987.2L737.0 987.1L737.9 987.4L738.9 987.9L739.8 988.1L740.8 987.7L741.7 987.2L742.7 987.1L743.6 987.4L744.6 987.9L745.5 988.1L746.5 987.7L747.4 987.2L748.4 987.1L749.3 987.4L750.3 987.9L751.2 988.1L752.2 987.7L753.1 987.2L754.1 987.1L755.0 987.4L756.0 987.9L756.9 988.1L757.9 987.7L758.8 987.2L759.8 987.1L760.7 987.4L761.7 987.9L762.6 988.1L763.6 987.7L764.5 987.2L765.5 987.1L766.4 987.4L767.4 987.9L768.3 988.1L769.3 987.7L770.2 987.2L771.2 987.1L772.1 987.4L773.1 987.9L774.0 988.1L775.0 987.7L775.9 987.2L776.9 987.1L777.8 987.4L778.8 987.9L779.7 988.1L780.7 987.7L781.6 987.2L782.6 987.1L783.5 987.4L784.5 987.9L785.4 988.1L786.4 987.7L787.3 987.2L788.3 987.1L789.2 987.4L790.2 987.9L791.1 988.1L792.1 987.7L793.0 987.2L794.0 987.1L794.9 987.4L795.9 987.9L796.8 988.1L797.8 987.7L798.7 987.2L799.7 987.1L800.6 987.4L801.6 987.9L802.5 988.1L803.5 987.7L804.4 987.2L805.4 987.1L806.3 987.4L807.3 987.9L808.2 988.1L809.2 987.7L810.1 987.2L811.1 987.1L812.0 987.4L813.0 987.9L813.9 988.1L814.9 987.7L815.8 987.2L816.8 987.1L817.7 987.4L818.7 987.9L819.6 988.1L820.6 987.7L821.5 987.2L822.5 987.1L823.4 987.4L824.4 987.9L825.3 988.1L826.3 987.7L827.2 987.2L828.2 987.1L829.1 987.4L830.1 987.9L831.0 988.1L832.0 987.7L832.9 987.2L833.9 987.1L834.8 987.4L835.8 987.9L836.7 988.1L837.7 987.7L838.6 987.2L839.6 987.1L840.5 987.4L841.5 987.9L842.4 988.1L843.4 987.7L844.3 987.2L845.3 987.1L846.2 987.4L847.2 987.9L848.1 988.1L849.1 987.7L850.0 987.2L851.0 987.1L851.9 987.4L852.9 987.9L853.8 988.1L854.8 987.7L855.7 987.2L856.7 987.1L857.6 987.4L858.6 987.9L859.5 988.1L860.5 987.7L861.4 987.2L862.4 987.1L863.3 987.4L864.3 987.9L864.9 987.6L865.1 983.7L865.6 983.7L865.9 987.6L865.2 988.1L866.2 987.7L867.1 987.2L868.1 987.1L869.0 987.4L870.0 987.9L870.9 988.1L871.9 987.7L872.8 987.2L873.8 987.1L874.7 987.4L875.7 987.9L876.6 988.1L877.6 987.7L878.5 987.2L879.5 987.1L880.4 987.4L881.4 987.9L882.3 988.1L883.3 987.7L884.2 987.2L885.2 987.1L886.1 987.4L887.1 987.9L888.0 988.1L889.0 987.7L889.9 987.2L890.9 987.1L891.8 987.4L892.8 987.9L893.7 988.1L894.7 987.7L895.6 987.2L896.6 987.1L897.5 987.4L898.5 987.9L899.0 987.6L899.3 976.0L899.8 976.0L900.0 987.6L899.4 988.1L900.4 987.7L901.3 987.2L902.3 987.1L903.2 987.4L904.2 987.9L905.1 988.1L906.1 987.7L907.0 987.2L908.0 987.1L908.9 987.4L909.9 987.9L910.8 988.1L911.8 987.7L912.7 987.2L913.7 987.1L914.6 987.4L915.6 987.9L916.5 988.1L917.5 987.7L918.4 987.2L919.4 987.1L920.3 987.4L920.2 987.6L920.5 983.7L921.0 983.7L921.2 987.6L921.3 987.9L922.2 988.1L923.2 987.7L924.1 987.2L925.1 987.1L926.0 987.4L927.0 987.9L927.9 988.1L928.9 987.7L929.8 987.2L930.8 987.1L931.7 987.4L932.7 987.9L933.6 988.1L934.6 987.7L935.5 987.2L936.5 987.1L937.4 987.4L938.4 987.9L939.3 988.1L940.3 987.7L941.2 987.2L941.5 987.6L941.7 981.4L942.2 981.4L942.5 987.6L942.2 987.1L943.1 987.4L944.1 987.9L945.0 988.1L946.0 987.7L946.9 987.2L947.9 987.1L948.5 987.6L948.8 976.7L949.3 976.7L949.5 987.6L948.8 987.4L949.8 987.9L950.7 988.1L951.7 987.7L952.6 987.2L953.6 987.1L954.5 987.4L955.5 987.9L956.4 988.1L957.4 987.7L958.3 987.2L959.3 987.1L960.2 987.4L961.2 987.9L962.1 988.1L963.1 987.7L963.4 987.6L963.6 978.4L964.1 978.4L964.4 987.6L964.0 987.2L965.0 987.1L965.9 987.4L966.9 987.9L967.8 988.1L968.8 987.7L969.7 987.2L970.4 987.6L970.6 981.4L971.1 981.4L971.4 987.6L970.7 987.1L971.6 987.4L972.6 987.9L973.5 988.1L974.5 987.7L975.4 987.2L976.4 987.1L977.3 987.4L978.3 987.9L979.2 988.1L980.2 987.7L981.1 987.2L982.1 987.1L983.0 987.4L984.0 987.9L984.5 987.6L984.8 977.3L985.3 977.3L985.5 987.6L984.9 988.1L985.9 987.7L986.8 987.2L987.8 987.1L988.7 987.4L989.7 987.9L990.6 988.1L991.6 987.7L991.5 987.6L991.8 976.1L993.2 976.1L993.4 987.6L992.5 987.2L993.5 987.1L994.4 987.4L995.4 987.9L996.3 988.1L997.3 987.7L998.2 987.2L999.2 987.1L999.2 987.6L999.4 975.4L1000.8 975.4L1001.1 987.6L1000.1 987.4L1001.1 987.9L1002.0 988.1L1003.0 987.7L1003.9 987.2L1004.9 987.1L1005.8 987.4L1006.3 987.6L1006.5 983.3L1007.0 983.3L1007.3 987.6L1006.8 987.9L1007.7 988.1L1008.7 987.7L1009.6 987.2L1010.6 987.1L1011.5 987.4L1012.5 987.9L1013.4 988.1L1013.3 987.6L1013.6 975.7L1014.1 975.7L1014.3 987.6L1014.4 987.7L1015.3 987.2L1016.3 987.1L1017.2 987.4L1018.2 987.9L1019.1 988.1L1020.1 987.7L1020.4 987.6L1020.7 976.7L1021.2 976.7L1021.4 987.6L1021.0 987.2L1022.0 987.1L1022.9 987.4L1023.9 987.9L1024.8 988.1L1025.1 987.6L1025.4 976.8L1025.9 976.8L1026.1 987.6L1025.8 987.7L1026.7 987.2L1027.7 987.1L1027.5 987.6L1027.7 976.7L1029.1 976.7L1029.4 987.6L1028.6 987.4L1029.6 987.9L1030.5 988.1L1031.5 987.7L1032.4 987.2L1033.4 987.1L1034.3 987.4L1034.6 987.6L1034.8 975.9L1035.3 975.9L1035.6 987.6L1035.3 987.9L1036.2 988.1L1037.2 987.7L1038.1 987.2L1039.1 987.1L1040.0 987.4L1041.0 987.9L1041.6 987.6L1041.9 976.6L1043.3 976.6L1043.5 987.6L1041.9 988.1L1042.9 987.7L1043.8 987.2L1044.8 987.1L1045.7 987.4L1046.7 987.9L1046.9 987.6L1047.2 975.4L1047.7 975.4L1047.9 987.6L1047.6 988.1L1048.6 987.7L1049.5 987.2L1050.5 987.1L1051.4 987.4L1052.4 987.9L1053.3 988.1L1054.3 987.7L1055.2 987.2L1055.8 987.6L1056.0 975.6L1056.5 975.6L1056.8 987.6L1056.2 987.1L1057.1 987.4L1058.1 987.9L1059.0 988.1L1060.0 987.7L1060.9 987.2L1061.9 987.1L1062.8 987.4L1063.5 987.6L1063.7 981.8L1064.2 981.8L1064.5 987.6L1063.8 987.9L1064.7 988.1L1065.7 987.7L1066.6 987.2L1067.6 987.1L1068.2 987.6L1068.4 974.6L1069.8 974.6L1070.1 987.6L1068.5 987.4L1069.5 987.9L1070.4 988.1L1071.4 987.7L1072.3 987.2L1073.3 987.1L1074.2 987.4L1074.7 987.6L1074.9 974.9L1076.3 974.9L1076.6 987.6L1075.2 987.9L1076.1 988.1L1077.1 987.7L1077.0 987.6L1077.3 976.5L1078.7 976.5L1078.9 987.6L1078.0 987.2L1079.0 987.1L1079.9 987.4L1080.9 987.9L1081.8 988.1L1082.8 987.7L1083.7 987.2L1084.7 987.1L1084.7 987.6L1084.9 976.2L1085.4 976.2L1085.7 987.6L1085.6 987.4L1086.6 987.9L1087.5 988.1L1088.5 987.7L1089.4 987.2L1090.0 987.6L1090.2 976.5L1090.7 976.5L1091.0 987.6L1090.4 987.1L1091.3 987.4L1092.3 987.9L1093.2 988.1L1094.2 987.7L1095.1 987.2L1096.1 987.1L1096.5 987.6L1096.7 975.4L1097.2 975.4L1097.5 987.6L1097.0 987.4L1098.0 987.9L1098.9 988.1L1099.9 987.7L1100.8 987.2L1101.8 987.1L1102.7 987.4L1103.7 987.9L1104.6 988.1L1105.6 987.7L1105.9 987.6L1106.2 975.6L1107.6 975.6L1107.8 987.6L1106.5 987.2L1107.5 987.1L1108.4 987.4L1109.4 987.9L1110.3 988.1L1110.6 987.6L1110.9 976.7L1112.3 976.7L1112.5 987.6L1111.3 987.7L1112.2 987.2L1113.2 987.1L1114.1 987.4L1115.1 987.9L1116.0 988.1L1117.0 987.7L1117.9 987.2L1117.7 987.6L1117.9 975.3L1118.4 975.3L1118.7 987.6L1118.9 987.1L1119.5 987.6L1119.7 976.2L1120.2 976.2L1120.5 987.6L1119.8 987.4L1120.8 987.9L1121.7 988.1L1122.7 987.7L1123.6 987.2L1124.6 987.1L1125.5 987.4L1125.4 987.6L1125.6 975.8L1127.0 975.8L1127.3 987.6L1126.5 987.9L1127.4 988.1L1128.4 987.7L1129.3 987.2L1130.3 987.1L1131.2 987.4L1132.2 987.9L1133.1 988.1L1133.0 987.6L1133.3 975.1L1133.8 975.1L1134.0 987.6L1134.1 987.7L1135.0 987.2L1136.0 987.1L1136.9 987.4L1137.9 987.9L1138.8 988.1L1139.8 987.7L1139.5 987.6L1139.8 976.3L1140.3 976.3L1140.5 987.6L1140.7 987.2L1141.7 987.1L1142.6 987.4L1143.6 987.9L1144.5 988.1L1145.5 987.7L1146.4 987.2L1146.6 987.6L1146.8 975.7L1147.3 975.7L1147.6 987.6L1147.4 987.1L1148.3 987.4L1149.3 987.9L1150.2 988.1L1151.2 987.7L1152.1 987.2L1153.1 987.1L1154.0 987.4L1154.3 987.6L1154.5 975.2L1155.9 975.2L1156.2 987.6L1155.0 987.9L1155.9 988.1L1156.9 987.7L1157.8 987.2L1158.8 987.1L1159.7 987.4L1160.7 987.9L1160.7 987.6L1161.0 974.6L1162.4 974.6L1162.6 987.6L1161.6 988.1L1162.6 987.7L1163.5 987.2L1164.5 987.1L1165.4 987.4L1166.4 987.9L1167.3 988.1L1167.8 987.6L1168.1 975.9L1168.6 975.9L1168.8 987.6L1168.3 987.7L1169.2 987.2L1170.2 987.1L1171.1 987.4L1172.1 987.9L1173.0 988.1L1174.0 987.7L1174.9 987.2L1174.9 987.6L1175.1 976.5L1175.6 976.5L1175.9 987.6L1175.9 987.1L1176.8 987.4L1177.8 987.9L1178.7 988.1L1179.7 987.7L1180.6 987.2L1181.6 987.1L1182.0 987.6L1182.2 976.8L1182.7 976.8L1183.0 987.6L1182.5 987.4L1183.5 987.9L1184.4 988.1L1185.4 987.7L1186.3 987.2L1187.3 987.1L1188.2 987.4L1189.2 987.9L1189.0 987.6L1189.3 975.1L1189.8 975.1L1190.0 987.6L1190.1 988.1L1191.1 987.7L1192.0 987.2L1193.0 987.1L1193.9 987.4L1194.9 987.9L1195.8 988.1L1196.1 987.6L1196.4 974.9L1196.9 974.9L1197.1 987.6L1196.8 987.3L1197.7 987.6L1197.8 987.6L1198.0 976.1L1199.0 976.1L1199.2 987.6L1198.7 988.0L1199.6 988.2L1200.1 987.6L1200.4 975.0L1201.4 975.0L1201.6 987.6L1200.6 988.0L1200.8 987.6L1201.1 975.3L1201.6 975.3L1201.8 987.6L1201.5 987.6L1202.5 987.6L1202.5 987.6L1202.8 977.7L1203.8 977.7L1204.0 987.6L1203.4 988.2L1204.4 988.2L1204.9 987.6L1205.2 974.8L1206.2 974.8L1206.4 987.6L1205.3 987.8L1206.3 987.7L1207.2 987.9L1207.3 987.6L1207.6 982.9L1208.6 982.9L1208.8 987.6L1208.2 988.1L1209.1 987.7L1209.7 987.6L1210.0 974.4L1211.0 974.4L1211.2 987.6L1210.1 988.3L1211.0 988.0L1212.0 987.8L1212.1 987.6L1212.3 977.5L1213.3 977.5L1213.6 987.6L1212.9 987.3L1213.9 987.6L1214.5 987.6L1214.7 973.8L1215.7 973.8L1216.0 987.6L1214.8 987.4L1215.8 987.8L1216.7 988.1L1216.9 987.6L1217.1 975.2L1218.1 975.2L1218.4 987.6L1217.7 988.0L1218.6 987.3L1219.3 987.6L1219.5 977.0L1220.5 977.0L1220.8 987.6L1219.6 987.6L1220.5 988.0L1221.5 988.3L1221.7 987.6L1221.9 975.2L1222.9 975.2L1223.2 987.6L1222.4 987.8L1223.4 987.6L1224.0 987.6L1224.3 977.4L1225.3 977.4L1225.5 987.6L1224.3 987.9L1225.3 988.0L1226.2 987.6L1226.4 987.6L1226.7 976.4L1227.7 976.4L1227.9 987.6L1227.2 987.3L1228.1 988.1L1229.1 988.3L1228.8 987.6L1229.1 977.9L1230.1 977.9L1230.3 987.6L1230.0 987.9L1231.0 987.9L1231.2 987.6L1231.5 976.2L1232.5 976.2L1232.7 987.6L1231.9 987.6L1232.9 988.1L1233.8 987.5L1233.6 987.6L1233.9 976.3L1234.9 976.3L1235.1 987.6L1234.8 987.5L1235.7 987.8L1236.0 987.6L1236.2 977.7L1237.2 977.7L1237.5 987.6L1236.7 988.1L1237.6 987.3L1238.6 988.0L1238.4 987.6L1238.6 975.2L1239.6 975.2L1239.9 987.6L1239.5 987.4L1240.5 988.1L1240.8 987.6L1241.0 973.5L1242.0 973.5L1242.3 987.6L1241.4 988.1L1242.4 987.5L1243.3 988.0L1243.2 987.6L1243.4 977.7L1244.4 977.7L1244.7 987.6L1244.3 987.3L1245.2 987.8L1245.6 987.6L1245.8 974.5L1246.8 974.5L1247.1 987.6L1246.2 988.1L1247.1 988.1L1248.1 987.9L1247.9 987.6L1248.2 982.0L1249.2 982.0L1249.4 987.6L1249.0 987.6L1250.0 987.3L1250.3 987.6L1250.6 976.0L1251.6 976.0L1251.8 987.6L1250.9 988.1L1251.9 987.9L1252.8 988.1L1252.7 987.6L1253.0 976.8L1254.0 976.8L1254.2 987.6L1253.8 987.3L1254.7 988.1L1255.1 987.6L1255.4 975.3L1256.4 975.3L1256.6 987.6L1255.7 988.2L1256.6 988.2L1257.6 987.9L1257.5 987.6L1257.8 974.3L1258.8 974.3L1259.0 987.6L1258.5 987.4L1259.5 987.4L1259.9 987.6L1260.1 977.1L1261.1 977.1L1261.4 987.6L1260.4 987.5L1261.4 987.3L1262.3 987.3L1262.3 987.6L1262.5 977.8L1263.5 977.8L1263.8 987.6L1263.3 988.0L1264.2 988.1L1264.7 987.6L1264.9 982.7L1265.9 982.7L1266.2 987.6L1265.2 987.3L1266.1 987.5L1267.1 988.3L1267.1 987.6L1267.3 974.9L1268.3 974.9L1268.6 987.6L1268.0 987.6L1269.0 987.9L1269.5 987.6L1269.7 977.1L1270.7 977.1L1271.0 987.6L1269.9 987.9L1270.9 988.0L1271.8 988.1L1271.8 987.6L1272.1 975.5L1273.1 975.5L1273.3 987.6L1272.8 988.3L1273.7 988.0L1274.2 987.6L1274.5 976.9L1275.5 976.9L1275.7 987.6L1274.7 987.9L1275.6 987.3L1276.6 988.2L1276.6 987.6L1276.9 974.8L1277.9 974.8L1278.1 987.6L1277.5 987.3L1278.5 988.1L1279.0 987.6L1279.3 975.4L1280.3 975.4L1280.5 987.6L1279.4 987.9L1280.4 987.4L1281.3 987.4L1281.4 987.6L1281.7 983.8L1282.7 983.8L1282.9 987.6L1282.3 987.8L1283.2 988.2L1283.8 987.6L1284.0 977.0L1285.0 977.0L1285.3 987.6L1284.2 987.8L1285.1 987.9L1286.1 987.3L1286.2 987.6L1286.4 974.9L1287.4 974.9L1287.7 987.6L1287.0 988.1L1288.0 987.9L1288.6 987.6L1288.8 974.8L1289.8 974.8L1290.1 987.6L1288.9 987.4L1289.9 988.3L1290.8 987.9L1291.0 987.6L1291.2 977.2L1292.2 977.2L1292.5 987.6L1291.8 987.5L1292.7 987.5L1293.4 987.6L1293.6 977.3L1294.6 977.3L1294.9 987.6L1293.7 988.3L1294.6 988.3L1295.6 988.2L1295.7 987.6L1296.0 975.3L1297.0 975.3L1297.2 987.6L1296.5 987.3L1297.5 988.0L1298.1 987.6L1298.4 973.5L1299.4 973.5L1299.6 987.6L1298.4 987.5L1299.4 987.4L1300.3 987.9L1300.5 987.6L1300.8 975.5L1301.8 975.5L1302.0 987.6L1301.3 988.0L1302.2 987.3L1303.2 987.7L1302.9 987.6L1303.2 977.4L1304.2 977.4L1304.4 987.6L1304.1 988.0L1305.1 987.6L1305.3 987.6L1305.6 975.4L1306.6 975.4L1306.8 987.6L1306.0 988.0L1307.0 988.0L1307.9 988.3L1307.7 987.6L1307.9 976.7L1308.9 976.7L1309.2 987.6L1308.9 987.5L1309.8 987.3L1310.1 987.6L1310.3 977.4L1311.3 977.4L1311.6 987.6L1310.8 987.6L1311.7 987.3L1312.7 988.3L1312.5 987.6L1312.7 975.1L1313.7 975.1L1314.0 987.6L1313.6 988.1L1314.6 987.8L1314.9 987.6L1315.1 975.3L1316.1 975.3L1316.4 987.6L1315.5 987.3L1316.5 987.3L1317.4 987.9L1317.3 987.6L1317.5 976.8L1318.5 976.8L1318.8 987.6L1318.4 988.0L1319.3 987.8L1319.6 987.6L1319.9 977.9L1320.9 977.9L1321.1 987.6L1320.3 987.8L1321.2 987.3L1322.2 988.1L1322.0 987.6L1322.3 976.3L1323.3 976.3L1323.5 987.6L1323.1 987.5L1324.1 987.5L1324.4 987.6L1324.7 975.2L1325.7 975.2L1325.9 987.6L1325.0 987.4L1326.0 987.5L1326.9 987.7L1326.8 987.6L1327.1 977.1L1328.1 977.1L1328.3 987.6L1327.9 988.0L1328.8 988.0L1329.2 987.6L1329.5 976.1L1330.5 976.1L1330.7 987.6L1329.8 987.9L1330.7 987.5L1331.7 988.2L1331.6 987.6L1331.8 977.5L1332.8 977.5L1333.1 987.6L1332.6 988.1L1333.6 987.5L1334.0 987.6L1334.2 976.5L1335.2 976.5L1335.5 987.6L1334.5 988.0L1335.5 988.2L1336.4 988.3L1336.4 987.6L1336.6 976.6L1337.6 976.6L1337.9 987.6L1337.4 987.7L1338.3 988.0L1338.8 987.6L1339.0 982.9L1340.0 982.9L1340.3 987.6L1339.3 987.3L1340.2 987.4L1341.2 987.3L1341.2 987.6L1341.4 973.2L1342.4 973.2L1342.7 987.6L1342.1 988.0L1343.1 988.2L1343.5 987.6L1343.8 976.4L1344.8 976.4L1345.0 987.6L1344.0 988.2L1345.0 987.8L1345.9 987.6L1345.9 987.6L1346.2 976.9L1347.2 976.9L1347.4 987.6L1346.9 987.8L1347.8 988.1L1348.3 987.6L1348.6 973.6L1349.6 973.6L1349.8 987.6L1348.8 987.9L1349.7 987.7L1350.7 987.6L1350.7 987.6L1351.0 977.1L1352.0 977.1L1352.2 987.6L1351.6 987.5L1352.6 987.4L1353.1 987.6L1353.4 976.2L1354.4 976.2L1354.6 987.6L1353.5 987.6L1354.5 988.2L1355.4 987.4L1355.5 987.6L1355.7 976.5L1356.7 976.5L1357.0 987.6L1356.4 988.0L1357.3 987.7L1357.9 987.6L1358.1 976.3L1359.1 976.3L1359.4 987.6L1358.3 987.9L1359.2 987.5L1360.2 988.1L1360.3 987.6L1360.5 976.3L1361.5 976.3L1361.8 987.6L1361.1 988.0L1362.1 988.0L1362.7 987.6L1362.9 975.7L1363.9 975.7L1364.2 987.6L1363.0 988.1L1364.0 987.4L1364.9 987.7L1365.1 987.6L1365.3 977.1L1366.3 977.1L1366.6 987.6L1365.9 988.0L1366.8 987.9L1367.4 987.6L1367.7 975.3L1368.7 975.3L1368.9 987.6L1367.8 987.3L1368.7 987.8L1369.7 988.1L1369.8 987.6L1370.1 974.1L1371.1 974.1L1371.3 987.6L1370.6 987.5L1371.6 987.6L1372.2 987.6L1372.5 975.8L1373.5 975.8L1373.7 987.6L1372.5 987.3L1373.5 988.2L1374.4 987.8L1374.6 987.6L1374.9 977.4L1375.9 977.4L1376.1 987.6L1375.4 987.4L1376.3 987.4L1377.0 987.6L1377.3 977.5L1378.3 977.5L1378.5 987.6L1377.3 987.3L1378.2 988.3L1379.2 988.0L1379.4 987.6L1379.6 977.2L1380.6 977.2L1380.9 987.6L1380.1 988.2L1381.1 988.1L1382.0 987.3L1381.8 987.6L1382.0 976.4L1383.0 976.4L1383.3 987.6L1383.0 987.7L1383.9 987.3L1384.2 987.6L1384.4 977.4L1385.4 977.4L1385.7 987.6L1384.9 987.9L1385.8 987.4L1386.8 987.8L1386.6 987.6L1386.8 976.9L1387.8 976.9L1388.1 987.6L1387.7 988.0L1388.7 987.5L1389.0 987.6L1389.2 973.6L1390.2 973.6L1390.5 987.6L1389.6 987.3L1390.6 988.2L1391.5 987.7L1391.3 987.6L1391.6 977.9L1392.6 977.9L1392.8 987.6L1392.5 987.7L1393.4 988.1L1393.7 987.6L1394.0 973.0L1395.0 973.0L1395.2 987.6L1394.4 987.9L1395.3 988.1L1396.3 988.1L1396.1 987.6L1396.4 974.1L1397.4 974.1L1397.6 987.6L1397.2 988.0L1398.2 987.7L1398.5 987.6L1398.8 975.5L1399.8 975.5L1400.0 987.6L1399.1 987.6L1400.1 988.1L1401.0 988.3L1400.9 987.6L1401.2 976.6L1402.2 976.6L1402.4 987.6L1402.0 988.0L1402.9 987.6L1403.3 987.6L1403.5 977.1L1404.5 977.1L1404.8 987.6L1403.9 988.1L1404.8 988.0L1405.8 988.1L1405.7 987.6L1405.9 976.1L1406.9 976.1L1407.2 987.6L1406.7 987.5L1407.7 987.7L1408.1 987.6L1408.3 977.7L1409.3 977.7L1409.6 987.6L1408.6 988.2L1409.6 988.2L1410.5 987.9L1410.5 987.6L1410.7 977.7L1411.7 977.7L1412.0 987.6L1411.5 987.7L1412.4 987.6L1412.9 987.6L1413.1 973.2L1414.1 973.2L1414.4 987.6L1413.4 988.2L1414.3 988.1L1415.3 987.6L1415.2 987.6L1415.5 975.2L1416.5 975.2L1416.7 987.6L1416.2 987.9L1417.2 988.0L1417.6 987.6L1417.9 976.2L1418.9 976.2L1419.1 987.6L1418.1 988.0L1419.1 987.3L1420.0 988.0L1420.0 987.6L1420.3 977.5L1421.3 977.5L1421.5 987.6L1421.0 987.7L1421.9 987.9L1422.4 987.6L1422.7 977.6L1423.7 977.6L1423.9 987.6L1422.9 987.9L1423.8 987.4L1424.8 987.3L1424.8 987.6L1425.1 977.3L1426.1 977.3L1426.3 987.6L1425.7 987.9L1426.7 988.1L1427.2 987.6L1427.4 975.5L1428.4 975.5L1428.7 987.6L1427.6 987.5L1428.6 988.1L1429.5 988.3L1429.6 987.6L1429.8 983.3L1430.8 983.3L1431.1 987.6L1430.5 987.4L1431.4 987.9L1432.0 987.6L1432.2 977.9L1433.2 977.9L1433.5 987.6L1432.4 987.4L1433.3 987.9L1434.3 987.4L1434.4 987.6L1434.6 977.3L1435.6 977.3L1435.9 987.6L1435.2 987.8L1436.2 988.1L1436.8 987.6L1437.0 977.6L1438.0 977.6L1438.3 987.6L1437.1 988.3L1438.1 987.7L1439.0 987.6L1439.1 987.6L1439.4 976.4L1440.4 976.4L1440.6 987.6L1440.0 987.4L1440.9 988.2L1441.5 987.6L1441.8 976.3L1442.8 976.3L1443.0 987.6L1441.9 987.6L1442.8 987.9L1443.8 987.8L1443.9 987.6L1444.2 976.8L1445.2 976.8L1445.4 987.6L1444.7 988.1L1445.7 988.0L1446.3 987.6L1446.6 975.9L1447.6 975.9L1447.8 987.6L1446.6 987.8L1447.6 987.3L1448.5 988.2L1448.7 987.6L1449.0 977.7L1450.0 977.7L1450.2 987.6L1449.5 987.8L1450.4 987.5L1451.1 987.6L1451.3 975.6L1452.3 975.6L1452.6 987.6L1451.4 987.3L1452.3 988.1L1453.3 988.2L1453.5 987.6L1453.7 977.7L1454.7 977.7L1455.0 987.6L1454.2 987.3L1455.2 987.3L1456.1 987.8L1455.9 987.6L1456.1 975.8L1457.1 975.8L1457.4 987.6L1457.1 988.2L1458.0 987.3L1458.3 987.6L1458.5 977.0L1459.5 977.0L1459.8 987.6L1459.0 987.9L1459.9 987.4L1460.9 987.7L1460.7 987.6L1460.9 976.5L1461.9 976.5L1462.2 987.6L1461.8 987.4L1462.8 988.1L1463.0 987.6L1463.3 974.9L1464.3 974.9L1464.5 987.6L1463.7 987.5L1464.7 988.1L1465.6 987.9L1465.4 987.6L1465.7 974.9L1466.7 974.9L1466.9 987.6L1466.6 987.4L1467.5 987.4L1467.8 987.6L1468.1 977.9L1469.1 977.9L1469.3 987.6L1468.5 988.1L1469.4 988.1L1470.4 987.9L1470.2 987.6L1470.5 976.3L1471.5 976.3L1471.7 987.6L1471.3 987.8L1472.3 987.9L1472.6 987.6L1472.9 977.9L1473.9 977.9L1474.1 987.6L1473.2 988.2L1474.2 988.0L1475.1 987.5L1475.0 987.6L1475.2 974.5L1476.2 974.5L1476.5 987.6L1476.1 987.4L1477.0 988.3L1477.4 987.6L1477.6 977.2L1478.6 977.2L1478.9 987.6L1478.0 987.7L1478.9 987.5L1479.9 988.3L1479.8 987.6L1480.0 975.6L1481.0 975.6L1481.3 987.6L1480.8 987.4L1481.8 988.2L1482.2 987.6L1482.4 975.2L1483.4 975.2L1483.7 987.6L1482.7 987.7L1483.7 987.7L1484.6 987.6L1484.6 987.6L1484.8 974.8L1485.8 974.8L1486.1 987.6L1485.6 988.0L1486.5 987.9L1486.9 987.6L1487.2 973.2L1488.2 973.2L1488.4 987.6L1487.5 987.7L1488.4 987.9L1489.4 987.6L1489.3 987.6L1489.6 976.0L1490.6 976.0L1490.8 987.6L1490.3 987.8L1491.3 987.8L1491.7 987.6L1492.0 977.5L1493.0 977.5L1493.2 987.6L1492.2 988.3L1493.2 987.7L1494.1 987.8L1494.1 987.6L1494.4 975.3L1495.4 975.3L1495.6 987.6L1495.1 988.1L1496.0 987.5L1496.5 987.6L1496.8 976.1L1497.8 976.1L1498.0 987.6L1497.0 987.5L1497.9 987.8L1498.9 988.1L1498.9 987.6L1499.1 975.8L1500.1 975.8L1500.4 987.6L1499.8 987.8L1500.8 988.2L1501.3 987.6L1501.5 977.5L1502.5 977.5L1502.8 987.6L1501.7 988.2L1502.7 987.8L1503.6 988.2L1503.7 987.6L1503.9 975.3L1504.9 975.3L1505.2 987.6L1504.6 987.8L1505.5 987.8L1506.1 987.6L1506.3 976.0L1507.3 976.0L1507.6 987.6L1506.5 988.3L1507.4 987.6L1508.4 988.2L1508.5 987.6L1508.7 977.9L1509.7 977.9L1510.0 987.6L1509.3 987.5L1510.3 987.5L1510.8 987.6L1511.1 976.3L1512.1 976.3L1512.3 987.6L1511.2 987.8L1512.2 988.2L1513.1 987.8L1513.2 987.6L1513.5 977.7L1514.5 977.7L1514.7 987.6L1514.1 987.9L1515.0 987.3L1515.6 987.6L1515.9 977.7L1516.9 977.7L1517.1 987.6L1516.0 988.2L1516.9 987.4L1517.9 987.3L1518.0 987.6L1518.3 977.3L1519.3 977.3L1519.5 987.6L1518.8 987.5L1519.8 987.4L1520.4 987.6L1520.7 976.4L1521.7 976.4L1521.9 987.6L1520.7 988.1L1521.7 987.3L1522.6 987.8L1522.8 987.6L1523.0 975.8L1524.0 975.8L1524.3 987.6L1523.6 987.3L1524.5 987.3L1525.2 987.6L1525.4 974.3L1526.4 974.3L1526.7 987.6L1525.5 988.1L1526.4 987.5L1527.4 987.3L1527.6 987.6L1527.8 975.6L1528.8 975.6L1529.1 987.6L1528.3 988.2L1529.3 987.9L1530.2 987.5L1530.0 987.6L1530.2 974.1L1531.2 974.1L1531.5 987.6L1531.2 988.1L1532.1 987.4L1532.4 987.6L1532.6 975.8L1533.6 975.8L1533.9 987.6L1533.1 988.0L1534.0 987.4L1535.0 988.1L1534.7 987.6L1535.0 976.3L1536.0 976.3L1536.2 987.6L1535.9 987.8L1536.9 987.3L1537.1 987.6L1537.4 977.5L1538.4 977.5L1538.6 987.6L1537.8 988.1L1538.8 988.0L1539.7 987.8L1539.5 987.6L1539.8 982.9L1540.8 982.9L1541.0 987.6L1540.7 988.0L1541.6 988.3L1541.9 987.6L1542.2 975.4L1543.2 975.4L1543.4 987.6L1542.6 988.1L1543.5 988.1L1544.5 987.3L1544.3 987.6L1544.6 977.1L1545.6 977.1L1545.8 987.6L1545.4 987.6L1546.4 987.4L1546.7 987.6L1546.9 977.3L1547.9 977.3L1548.2 987.6L1547.3 988.1L1548.3 987.5L1549.2 988.2L1549.1 987.6L1549.3 976.3L1550.3 976.3L1550.6 987.6L1550.2 987.7L1551.1 987.6L1551.5 987.6L1551.7 975.4L1552.7 975.4L1553.0 987.6L1552.1 987.9L1553.0 987.4L1554.0 987.7L1553.9 987.6L1554.1 975.7L1555.1 975.7L1555.4 987.6L1554.9 987.7L1555.9 987.4L1556.3 987.6L1556.5 974.5L1557.5 974.5L1557.8 987.6L1556.8 988.2L1557.8 987.3L1558.7 987.6L1558.6 987.6L1558.9 976.5L1559.9 976.5L1560.1 987.6L1559.7 987.9L1560.6 987.5L1561.0 987.6L1561.3 976.8L1562.3 976.8L1562.5 987.6L1561.6 988.0L1562.5 987.3L1563.5 987.7L1563.4 987.6L1563.7 977.9L1564.7 977.9L1564.9 987.6L1564.4 987.9L1565.4 987.5L1565.8 987.6L1566.1 977.5L1567.1 977.5L1567.3 987.6L1566.3 987.8L1567.3 988.1L1568.2 987.5L1568.2 987.6L1568.5 975.1L1569.5 975.1L1569.7 987.6L1569.2 988.2L1570.1 987.4L1570.6 987.6L1570.8 976.7L1571.8 976.7L1572.1 987.6L1571.1 988.0L1572.0 987.6L1573.0 987.3L1573.0 987.6L1573.2 976.8L1574.2 976.8L1574.5 987.6L1573.9 987.7L1574.9 987.6L1575.4 987.6L1575.6 973.2L1576.6 973.2L1576.9 987.6L1575.8 988.0L1576.8 988.3L1577.7 988.3L1577.8 987.6L1578.0 975.0L1579.0 975.0L1579.3 987.6L1578.7 988.1L1579.6 987.7L1580.2 987.6L1580.4 976.3L1581.4 976.3L1581.7 987.6L1580.6 987.8L1581.5 987.8L1582.5 987.4L1582.5 987.6L1582.8 974.9L1583.8 974.9L1584.0 987.6L1583.4 988.2L1584.4 988.1L1584.9 987.6L1585.2 975.9L1586.2 975.9L1586.4 987.6L1585.3 987.6L1586.3 988.3L1587.2 988.3L1587.3 987.6L1587.6 976.2L1588.6 976.2L1588.8 987.6L1588.2 987.9L1589.1 988.2L1589.7 987.6L1590.0 975.6L1591.0 975.6L1591.2 987.6L1590.1 987.9L1591.0 988.1L1592.0 987.7L1592.1 987.6L1592.4 975.9L1593.4 975.9L1593.6 987.6L1592.9 987.7L1593.9 988.1L1594.5 987.6L1594.7 975.0L1595.7 975.0L1596.0 987.6L1594.8 987.6L1595.8 987.8L1596.7 988.2L1596.9 987.6L1597.1 976.8L1598.1 976.8L1598.4 987.6L1597.7 987.3L1598.6 988.0L1599.3 987.6L1599.5 974.9L1600.5 974.9L1600.8 987.6L1599.6 988.1L1600.5 988.2L1601.5 987.6L1601.7 987.6L1601.9 977.0L1602.9 977.0L1603.2 987.6L1602.4 987.4L1603.4 987.5L1604.1 987.6L1604.3 977.4L1605.3 977.4L1605.6 987.6L1604.3 987.9L1605.3 988.0L1606.2 988.3L1606.4 987.6L1606.7 975.1L1607.7 975.1L1607.9 987.6L1607.2 987.6L1608.1 987.7L1609.1 987.9L1608.8 987.6L1609.1 975.1L1610.1 975.1L1610.3 987.6L1610.0 987.6L1611.0 987.8L1611.2 987.6L1611.5 977.5L1612.5 977.5L1612.7 987.6L1611.9 987.3L1612.9 987.5L1613.8 988.0L1613.6 987.6L1613.9 974.1L1614.9 974.1L1615.1 987.6L1614.8 987.4L1615.7 988.2L1616.0 987.6L1616.3 976.1L1617.3 976.1L1617.5 987.6L1616.7 987.7L1617.6 987.9L1618.6 988.0L1618.4 987.6L1618.6 976.6L1619.6 976.6L1619.9 987.6L1619.5 988.2L1620.5 987.5L1620.8 987.6L1621.0 976.7L1622.0 976.7L1622.3 987.6L1621.4 988.3L1622.4 987.7L1623.3 987.3L1623.2 987.6L1623.4 977.1L1624.4 977.1L1624.7 987.6L1624.3 988.1L1625.2 988.1L1625.6 987.6L1625.8 976.3L1626.8 976.3L1627.1 987.6L1626.2 987.7L1627.1 987.8L1628.1 987.6L1628.0 987.6L1628.2 977.2L1629.2 977.2L1629.5 987.6L1629.0 987.5L1630.0 988.1L1630.3 987.6L1630.6 976.7L1631.6 976.7L1631.8 987.6L1630.9 988.0L1631.9 988.0L1632.8 988.2L1632.7 987.6L1633.0 983.8L1634.0 983.8L1634.2 987.6L1633.8 987.4L1634.7 987.5L1635.1 987.6L1635.4 975.7L1636.4 975.7L1636.6 987.6L1635.7 987.6L1636.6 988.3L1637.6 987.4L1637.5 987.6L1637.8 973.9L1638.8 973.9L1639.0 987.6L1638.5 987.5L1639.5 987.8L1639.9 987.6L1640.2 975.3L1641.2 975.3L1641.4 987.6L1640.4 987.5L1641.4 987.8L1642.3 988.1L1642.3 987.6L1642.5 974.2L1643.5 974.2L1643.8 987.6L1643.3 988.2L1644.2 988.1L1644.7 987.6L1644.9 975.8L1645.9 975.8L1646.2 987.6L1645.2 988.3L1646.1 987.9L1647.1 987.5L1647.1 987.6L1647.3 975.9L1648.3 975.9L1648.6 987.6L1648.0 987.6L1649.0 987.4L1649.5 987.6L1649.7 973.3L1650.7 973.3L1651.0 987.6L1649.9 987.6L1650.9 988.0L1651.8 988.1L1652.3 987.6L1652.5 973.7L1653.4 973.7L1653.7 987.6L1652.8 987.7L1653.7 987.2L1654.7 987.1L1655.6 987.4L1656.6 987.9L1657.0 987.6L1657.3 984.3L1658.5 984.3L1658.7 987.6L1657.5 988.1L1658.5 987.7L1659.4 987.2L1660.4 987.1L1661.3 987.4L1662.3 987.9L1663.2 988.1L1664.2 987.7L1664.1 987.6L1664.3 974.9L1665.2 974.9L1665.5 987.6L1665.1 987.2L1666.1 987.1L1667.0 987.4L1668.0 987.9L1668.2 987.6L1668.5 983.2L1669.7 983.2L1669.9 987.6L1668.9 988.1L1669.9 987.7L1670.8 987.2L1671.8 987.1L1672.3 987.6L1672.6 973.7L1673.5 973.7L1673.7 987.6L1672.7 987.4L1673.7 987.9L1674.6 988.1L1675.6 987.7L1676.5 987.2L1677.5 987.1L1678.4 987.4L1679.4 987.9L1680.0 987.6L1680.3 975.5L1681.2 975.5L1681.4 987.6L1680.3 988.1L1681.3 987.7L1682.2 987.2L1683.2 987.1L1684.1 987.4L1685.1 987.9L1686.0 988.1L1686.5 987.6L1686.7 972.6L1687.6 972.6L1687.9 987.6L1687.0 987.7L1687.9 987.2L1688.9 987.1L1689.4 987.6L1689.7 983.2L1690.9 983.2L1691.1 987.6L1689.8 987.4L1690.8 987.9L1691.7 988.1L1692.7 987.7L1693.6 987.2L1694.6 987.1L1694.8 987.6L1695.0 982.0L1696.2 982.0L1696.5 987.6L1695.5 987.4L1696.5 987.9L1697.4 988.1L1698.4 987.7L1699.3 987.2L1700.3 987.1L1700.1 987.6L1700.3 972.6L1701.2 972.6L1701.5 987.6L1701.2 987.4L1702.2 987.9L1703.1 988.1L1704.1 987.7L1705.0 987.2L1704.8 987.6L1705.0 981.4L1706.2 981.4L1706.5 987.6L1706.0 987.1L1706.9 987.4L1707.9 987.9L1708.3 987.6L1708.6 974.9L1709.5 974.9L1709.7 987.6L1708.8 988.1L1709.8 987.7L1710.7 987.2L1711.7 987.1L1712.6 987.4L1713.0 987.6L1713.3 983.2L1714.5 983.2L1714.7 987.6L1713.6 987.9L1714.5 988.1L1715.5 987.7L1716.4 987.2L1717.4 987.1L1717.2 987.6L1717.4 983.8L1718.6 983.8L1718.9 987.6L1718.3 987.4L1719.3 987.9L1720.2 988.1L1721.2 987.7L1722.1 987.2L1721.9 987.6L1722.1 974.9L1723.0 974.9L1723.3 987.6L1723.1 987.1L1724.0 987.4L1725.0 987.9L1725.9 988.1L1726.9 987.7L1727.8 987.2L1727.8 987.6L1728.0 984.3L1729.2 984.3L1729.5 987.6L1728.8 987.1L1729.7 987.4L1730.7 987.9L1731.6 988.1L1732.6 987.7L1733.5 987.2L1733.7 987.6L1733.9 982.6L1735.1 982.6L1735.4 987.6L1734.5 987.1L1735.4 987.4L1736.4 987.9L1737.3 988.1L1738.3 987.7L1738.4 987.6L1738.6 983.2L1739.8 983.2L1740.1 987.6L1739.2 987.2L1740.2 987.1L1741.1 987.4L1742.1 987.9L1743.0 988.1L1743.7 987.6L1743.9 972.6L1744.8 972.6L1745.1 987.6L1744.0 987.7L1744.9 987.2L1745.9 987.1L1746.8 987.4L1747.8 987.9L1748.7 988.1L1749.0 987.6L1749.2 983.2L1750.4 983.2L1750.7 987.6L1749.7 987.7L1750.6 987.2L1751.6 987.1L1752.5 987.4L1753.5 987.9L1754.4 988.1L1755.4 987.7L1756.3 987.2L1756.1 987.6L1756.3 984.3L1757.5 984.3L1757.8 987.6L1757.3 987.1L1758.2 987.4L1759.2 987.9L1760.1 988.1L1761.1 987.7L1762.0 987.2L1763.0 987.1L1763.1 987.6L1763.4 982.0L1764.6 982.0L1764.8 987.6L1763.9 987.4L1764.9 987.9L1765.8 988.1L1766.8 987.7L1767.7 987.2L1768.7 987.1L1769.0 987.6L1769.3 983.2L1770.5 983.2L1770.7 987.6L1769.6 987.4L1770.6 987.9L1771.5 988.1L1772.0 987.6L1772.2 974.9L1773.1 974.9L1773.4 987.6L1772.5 987.7L1773.4 987.2L1774.4 987.1L1775.3 987.4L1776.3 987.9L1777.2 988.1L1778.2 987.7L1779.1 987.2L1780.1 987.1L1781.0 987.4L1780.8 987.6L1781.1 984.3L1782.3 984.3L1782.5 987.6L1782.0 987.9L1782.9 988.1L1783.9 987.7L1783.8 987.6L1784.0 977.3L1784.9 977.3L1785.2 987.6L1784.8 987.2L1785.8 987.1L1786.7 987.4L1787.7 987.9L1788.6 988.1L1789.6 987.7L1790.5 987.2L1791.5 987.1L1791.4 987.6L1791.7 979.0L1792.6 979.0L1792.8 987.6L1792.4 987.4L1793.4 987.9L1793.8 987.6L1794.1 984.3L1795.3 984.3L1795.5 987.6L1794.3 988.1L1795.3 987.7L1796.2 987.2L1797.2 987.1L1798.1 987.4L1798.5 987.6L1798.8 977.3L1799.7 977.3L1799.9 987.6L1799.1 987.9L1800.0 988.1L1801.0 987.7L1801.9 987.2L1802.9 987.1L1803.8 987.4L1804.4 987.6L1804.7 984.3L1805.9 984.3L1806.1 987.6L1804.8 987.9L1805.7 988.1L1806.7 987.7L1807.6 987.2L1808.6 987.1L1809.5 987.4L1810.5 987.9L1811.4 988.1L1812.4 987.7L1813.3 987.2L1814.3 987.1L1815.2 986.3L1816.2 987.1L1817.1 986.6L1818.1 986.9L1818.6 987.6L1818.8 982.0L1819.7 982.0L1820.0 987.6L1819.0 984.0L1820.0 987.8L1820.9 986.4L1821.9 987.5L1822.8 986.4L1823.8 988.2L1824.7 986.8L1825.7 987.8L1825.6 987.6L1825.9 982.0L1826.8 982.0L1827.0 987.6L1826.6 987.0L1827.6 987.7L1828.5 986.9L1829.5 987.7L1830.4 987.0L1831.4 988.1L1831.5 987.6L1831.8 984.3L1833.0 984.3L1833.2 987.6L1832.3 984.8L1833.3 987.9L1834.2 986.5L1835.2 987.9L1836.1 986.1L1837.1 987.2L1838.0 986.8L1839.0 987.7L1839.9 986.2L1840.9 988.1L1841.8 986.3L1842.8 988.3L1843.7 987.3L1844.7 987.6L1845.6 986.8L1845.7 987.6L1845.9 983.2L1847.1 983.2L1847.4 987.6L1846.6 987.8L1847.5 987.3L1848.5 987.6L1849.4 986.9L1850.4 988.2L1851.3 986.8L1852.3 987.6L1853.2 985.9L1854.2 987.0L1855.1 986.8L1856.1 987.4L1857.0 986.5L1858.0 987.4L1858.9 986.1L1859.9 987.3L1860.8 987.2L1861.8 987.6L1862.7 987.4L1863.7 988.0L1864.6 987.3L1865.6 988.1L1866.5 987.2L1867.5 988.1L1868.4 986.6L1869.4 988.1L1870.3 987.0L1871.3 987.3L1872.2 986.3L1873.2 987.5L1874.1 985.9L1875.1 984.9L1876.0 986.7L1877.0 987.0L1877.9 986.6L1878.9 987.9L1879.8 986.6L1880.8 987.5L1881.7 987.0L1882.7 988.3L1883.6 986.8L1884.6 988.3L1885.5 986.6L1886.5 988.3L1887.4 986.4L1888.4 988.1L1889.3 986.4L1890.3 987.9L1891.2 986.7L1892.2 987.4L1893.1 986.5L1894.1 986.9L1895.0 986.7L1896.0 987.8L1896.9 985.9L1897.9 987.3L1898.8 986.9L1899.8 988.1L1900.7 986.9L1901.7 988.0L1902.6 986.7L1903.6 987.8L1904.5 987.3L1905.5 988.0L1906.4 986.4L1907.4 987.7L1908.3 986.8L1909.3 987.4L1910.2 986.2L1911.2 987.1L1912.1 986.2L1913.1 987.6L1914.0 986.7L1915.0 987.1L1915.9 986.3L1916.9 987.6L1917.8 986.4L1918.8 987.5L1919.7 987.1L1920.7 987.6L1921.6 986.9L1922.6 988.4L1923.5 987.3L1924.5 987.5L1925.4 987.3L1926.4 987.8L1927.3 986.7L1928.3 987.3L1929.2 986.6L1930.2 987.8L1931.1 986.5L1932.1 987.8L1933.0 986.5L1934.0 987.6L1934.9 986.9L1935.9 987.6L1936.8 986.7L1937.8 987.9L1938.7 986.2L1939.7 988.1L1940.6 987.0L1941.6 988.3L1942.5 986.6L1943.5 988.0L1944.4 987.2L1945.4 988.0L1946.3 986.4L1947.3 987.8L1948.2 986.5L1949.2 987.2L1950.1 986.1L1951.1 987.5L1952.0 986.4L1953.0 987.9L1953.9 986.6L1954.9 987.6L1955.8 986.5L1956.8 987.4L1957.7 986.2L1958.7 988.2L1959.6 986.4L1960.6 988.3L1961.5 984.7L1962.5 988.5L1963.4 986.8L1964.4 988.3L1965.3 987.1L1966.3 987.9L1967.2 986.2L1968.2 987.9L1969.1 986.3L1970.1 987.3L1971.0 986.0L1972.0 987.7L1972.9 986.3L1973.9 987.5L1974.8 986.4L1975.8 987.8L1976.7 986.6L1977.7 987.8L1978.6 986.8L1979.6 987.9L1980.5 987.4L1981.5 988.0L1982.4 986.8L1983.4 988.1L1984.3 986.4L1985.3 987.7L1986.2 987.2L1987.2 987.4L1988.1 986.7L1989.1 987.4L1990.0 986.0L1991.0 987.1L1991.9 986.5L1992.9 987.5L1993.8 986.4L1994.8 987.8L1995.7 986.6L1996.7 987.3L1997.6 986.4L1998.6 987.9L1999.5 986.9L2000.5 987.8L2001.4 987.1L2002.4 988.2L2003.3 986.7L2004.3 988.3L2005.2 986.3L2006.2 988.1L2007.1 987.1L2008.1 987.1L2009.0 986.2L2010.0 987.0L2010.9 986.2L2011.9 987.2L2012.8 986.2L2013.8 987.3L2014.7 986.2L2015.7 988.0L2016.6 986.4L2017.6 987.7L2018.5 986.5L2019.5 987.9L2020.4 987.1L2021.4 988.2L2022.3 986.8L2023.3 988.4L2024.2 987.3L2025.2 987.4L2026.1 986.2L2027.1 988.0L2028.0 986.3L2029.0 986.9L2029.9 986.4L2030.9 987.2L2031.8 984.6L2032.8 987.9L2033.7 986.9L2034.7 988.0L2035.6 985.0L2036.6 987.6L2037.5 986.6L2038.5 988.4L2039.4 986.7L2040.4 987.7L2041.3 986.8L2042.3 988.0L2043.2 987.1L2044.2 985.5L2045.1 987.1L2046.1 987.3L2047.0 986.7L2048.0 987.8L2048.9 986.4L2049.9 987.5L2050.8 986.4L2051.8 987.8L2052.7 986.6L2053.7 987.4L2054.6 986.7L2055.6 987.3L2056.5 986.7L2057.5 988.4L2058.4 986.7L2059.4 988.2L2060.3 986.4L2061.3 987.8L2062.2 986.9L2063.2 987.9L2064.1 986.6L2065.1 987.3L2066.0 987.0L2067.0 987.5L2067.9 986.0L2068.9 987.8L2069.8 986.0L2070.8 987.3L2071.7 986.0L2072.7 987.3L2073.6 986.7L2074.6 987.6L2075.5 987.1L2076.5 987.4L2077.4 986.8L2078.4 988.0L2079.3 987.2L2080.3 987.7L2081.2 987.3L2082.2 987.6L2083.1 986.7L2084.1 987.3L2085.0 986.6L2086.0 987.8L2086.9 986.7L2087.9 987.5L2088.8 986.4L2089.8 987.7L2090.7 985.9L2091.7 987.9L2092.6 986.2L2093.6 987.5L2094.5 984.6L2095.5 988.3L2096.4 986.5L2097.4 987.9L2098.3 986.7L2099.3 987.5L2100.2 986.6L2101.2 988.1L2102.1 987.1L2103.1 988.2L2104.0 986.5L2105.0 987.6L2105.9 986.0L2106.9 987.3L2107.8 986.7L2108.8 987.6L2109.7 986.2L2110.7 987.3L2111.6 986.5L2112.6 987.1L2113.5 986.9L2114.5 988.0L2115.4 986.4L2116.4 987.6L2117.3 986.6L2118.3 987.8L2119.2 987.4L2120.2 987.7L2121.1 986.6L2122.1 987.7L2123.0 987.1L2124.0 987.8L2124.9 986.5L2125.9 987.7L2126.8 984.1L2127.8 987.1L2128.7 986.8L2129.7 987.7L2130.6 986.0L2131.6 987.9L2132.5 987.0L2133.5 987.4L2134.4 986.8L2135.4 987.6L2136.3 986.8L2137.3 988.3L2138.2 986.7L2139.2 988.3L2140.1 987.1L2141.1 988.2L2142.0 986.3L2143.0 988.0L2143.9 986.7L2144.9 987.9L2145.8 986.8L2146.8 987.2L2147.7 986.3L2148.7 987.6L2149.6 986.5L2150.6 987.0L2151.5 987.0L2152.5 987.3L2153.4 986.5L2154.4 985.3L2155.3 986.6L2156.3 986.3L2157.2 986.6L2158.2 988.3L2159.1 986.5L2160.1 987.8L2161.0 987.1L2162.0 987.5L2162.9 987.0L2163.9 987.4L2164.8 986.6L2165.8 987.3L2166.7 986.0L2167.7 987.7L2168.6 986.1L2169.6 987.2L2170.5 986.2L2171.5 987.3L2172.4 984.6L2173.4 987.4L2174.3 986.5L2175.3 988.3L2176.2 987.1L2177.2 988.1L2178.1 987.4L2179.1 988.0L2180.0 987.2L2181.0 987.4L2181.9 986.8L2182.9 987.7L2183.8 986.9L2184.8 986.9L2185.7 986.3L2186.7 985.2L2187.6 985.9L2188.6 987.8L2189.5 986.7L2190.5 988.1L2191.4 986.4L2192.4 988.3L2193.3 986.7L2194.3 987.7L2195.2 986.5L2196.2 988.5L2197.1 986.9L2198.1 988.2L2199.0 986.9L2200.0 987.7L2200.9 987.0L2201.9 987.3L2202.8 986.1L2203.8 987.5L2204.7 986.0L2205.7 987.5L2206.6 986.0L2207.6 987.7L2208.5 986.5L2209.5 987.2L2210.4 986.3L2211.4 988.2L2212.3 986.3L2213.3 988.2L2214.2 986.8L2215.2 987.9L2216.1 987.0L2217.1 988.4L2218.0 986.4L2219.0 987.4L2219.9 986.4L2220.9 987.2L2221.8 986.4L2222.8 987.3L2223.7 986.3L2224.7 987.2L2225.6 986.3L2226.6 986.9L2227.5 986.6L2228.5 987.9L2229.4 986.1L2230.4 987.9L2231.3 986.7L2232.3 988.3L2233.2 987.1L2234.2 988.2L2235.1 987.4L2236.1 987.6L2237.0 986.8L2238.0 988.2L2238.9 986.8L2239.9 987.6L2240.8 986.7L2241.8 987.8L2242.7 986.5L2243.7 987.9L2244.6 985.9L2245.6 987.3L2246.5 986.6L2247.5 987.7" stroke="#339900" stroke-width="2"/>
<path d="M413.0 826.3H415.2 V816.8H433.1 V833.9H451.0 V826.6H468.9 V826.6H486.8 V819.3H504.7 V833.9H522.6 V826.6H540.5 V826.6H558.4 V816.8H576.3 V833.9H594.2 V826.6H612.1 V826.6H630.0 V819.3H647.9 V833.9H665.8 V826.6H683.7 V826.6H701.6 V814.2H719.5 V833.9H737.4 V829.0H755.3 V824.1H773.2 V819.3H791.1 V833.9H809.0 V826.6H826.9 V824.1H844.8 V819.3H862.7 V833.9H880.6 V829.0H898.5 V824.1H916.4 V816.8H934.3 V833.9H952.2 V829.0H970.1 V824.1H988.0 V819.3H1005.9 V833.9H1023.8 V826.6H1041.7 V826.6H1059.6 V819.3H1077.5 V833.9H1095.4 V829.0H1113.3 V824.1H1131.2 V819.3H1149.1 V836.3H1167.0 V826.6H1184.9 V824.1H1202.8 V819.3H1220.7 V833.9H1238.6 V829.0H1256.5 V826.6H1274.4 V819.3H1292.3 V836.3H1310.2 V829.0H1328.1 V824.1H1346.0 V819.3H1363.9 V833.9H1381.8 V829.0H1399.7 V824.1H1417.6 V819.3H1435.5 V833.9H1453.4 V826.6H1471.3 V824.1H1489.2 V816.8H1507.1 V836.3H1525.0 V826.6H1542.9 V826.6H1560.8 V819.3H1578.7 V831.5H1596.6 V826.6H1614.5 V826.6H1632.4 V819.3H1650.3 V836.3H1668.2 V829.0H1686.1 V826.6H1704.0 V816.8H1721.9 V833.9H1739.8 V826.6H1757.7 V826.6H1775.6 V819.3H1793.5 V833.9H1811.4 V829.0H1829.3 V826.6H1847.2 V816.8H1865.1 V833.9H1883.0 V826.6H1900.9 V824.1H1918.8 V819.3H1936.7 V833.9H1954.6 V826.6H1972.5 V824.1H1990.4 V819.3H2008.3 V833.9H2026.2 V826.6H2044.1 V824.1H2062.0 V819.3H2079.9 V833.9H2097.8 V829.0H2115.7 V824.1H2133.6 V816.8H2151.5 V833.9H2169.4 V829.0H2187.3 V824.1H2205.2 V819.3H2223.1 V833.9H2241.0 V826.6H2258.9 V826.6H2248.0" stroke="#990099" stroke-width="2"/>
<path d="M413.0 863.4H415.6 V588.9H433.8 V863.1H451.4 V592.2H469.6 V864.4H487.1 V588.9H505.4 V863.1H523.0 V592.2H541.2 V864.4H558.8 V588.9H577.0 V863.1H594.5 V592.2H612.8 V864.4H630.4 V588.9H648.6 V863.1H666.1 V592.2H684.4 V864.4H702.0 V588.9H720.2 V863.1H737.8 V592.2H756.0 V864.4H773.5 V588.9H791.8 V863.1H809.3 V592.2H827.6 V864.4H845.1 V588.9H863.4 V863.1H881.0 V592.2H899.2 V864.4H916.8 V588.9H935.0 V863.1H952.5 V592.2H970.8 V864.4H988.3 V588.9H1006.6 V863.1H1024.1 V592.2H1042.4 V864.4H1060.0 V588.9H1078.2 V863.1H1095.8 V592.2H1114.0 V864.4H1131.5 V588.9H1149.8 V863.1H1167.3 V592.2H1185.6 V864.4H1203.1 V588.9H1221.4 V863.1H1239.0 V592.2H1257.2 V864.4H1274.8 V588.9H1293.0 V863.1H1310.5 V592.2H1328.8 V864.4H1346.3 V588.9H1364.6 V863.1H1382.1 V592.2H1400.4 V864.4H1417.9 V588.9H1436.2 V863.1H1453.7 V592.2H1472.0 V864.4H1489.5 V588.9H1507.8 V863.1H1525.3 V592.2H1543.6 V864.4H1561.1 V595.3H1579.4 V863.1H1596.9 V592.2H1615.2 V864.4H1632.7 V595.3H1651.0 V863.1H1668.5 V592.2H1686.8 V864.4H1704.3 V595.3H1722.6 V863.1H1740.1 V592.2H1758.4 V864.4H1775.9 V595.3H1794.2 V863.1H1811.7 V592.2H1830.0 V864.4H1847.5 V595.3H1865.8 V863.1H1883.3 V592.2H1901.6 V864.4H1919.1 V595.3H1937.4 V863.1H1954.9 V592.2H1973.2 V864.4H1990.7 V595.3H2009.0 V863.1H2026.5 V592.2H2044.8 V864.4H2062.3 V595.3H2080.6 V863.1H2098.2 V592.2H2116.4 V864.4H2133.9 V595.3H2152.2 V863.1H2169.8 V592.2H2188.0 V864.4H2205.5 V595.3H2223.8 V863.1H2241.3 V592.2H2248.0" stroke="#2f98c9" stroke-width="2"/>
</g>
<g opacity="0.05"><rect x="1047.5" y="928.5" width="165" height="44" rx="3" fill="#f7f7f7" stroke="#339900"/><text x="1056.5" y="948.5" font-size="10" fill="#333">Wednesday, Feb 5, 09:04:43.607</text><text x="1056.5" y="963.5" font-size="12" fill="#339900">Potenza GEFRAN: <tspan font-weight="bold" fill="#333">2.20W</tspan></text></g>
<path d="M413 1059.5H2248" stroke="#b2b1b6" stroke-width="1.3"/>
<path d="M548.5 1060V1099" stroke="#e6e6e6" stroke-width="1"/>
<path d="M735.5 1060V1099" stroke="#e6e6e6" stroke-width="1"/>
<path d="M923.5 1060V1099" stroke="#e6e6e6" stroke-width="1"/>
<path d="M1110.5 1060V1099" stroke="#e6e6e6" stroke-width="1"/>
<path d="M1297.5 1060V1099" stroke="#e6e6e6" stroke-width="1"/>
<path d="M1485.5 1060V1099" stroke="#e6e6e6" stroke-width="1"/>
<path d="M1672.5 1060V1099" stroke="#e6e6e6" stroke-width="1"/>
<path d="M1859.5 1060V1099" stroke="#e6e6e6" stroke-width="1"/>
<path d="M2047.5 1060V1099" stroke="#e6e6e6" stroke-width="1"/>
<path d="M2234.5 1060V1099" stroke="#e6e6e6" stroke-width="1"/>
<path d="M448.3 1088.7L449.8 1080.6L451.2 1084.4L452.5 1082.2L453.6 1094.5L455.0 1094.5L456.6 1090.8L457.6 1092.5L458.5 1084.7L459.4 1076.7L460.9 1077.4L462.2 1081.9L463.3 1082.5L464.8 1088.6L465.8 1091.0L467.3 1081.4L468.4 1065.3L469.3 1074.9L470.6 1064.4L471.5 1073.8L472.6 1088.4L474.2 1086.9L475.3 1094.5L476.7 1094.0L477.9 1090.1L478.9 1079.5L480.1 1082.3L481.7 1073.8L483.2 1089.0L484.7 1090.7L486.3 1094.5L487.7 1094.5L488.7 1094.5L489.8 1085.3L491.0 1072.6L492.3 1070.3L493.3 1071.0L494.4 1086.6L495.9 1093.1L497.4 1090.4L498.4 1094.2L499.5 1079.9L501.0 1071.5L502.0 1066.2L503.0 1071.1L504.4 1084.0L505.4 1093.4L506.6 1094.5L507.8 1088.4L508.9 1077.5L510.3 1073.1L511.3 1076.2L512.8 1079.2L513.7 1086.8L515.2 1094.5L516.1 1094.5L517.6 1088.6L519.1 1077.1L520.5 1072.7L521.7 1076.6L523.0 1085.6L524.3 1091.6L525.6 1088.8L527.0 1092.7L528.3 1085.2L529.3 1068.3L530.6 1072.7L532.0 1072.4L533.6 1076.3L534.7 1081.7L535.7 1082.6L536.9 1084.9L538.3 1092.0L539.7 1075.8L540.9 1075.3L541.9 1073.7L543.4 1071.3L544.5 1084.7L545.6 1090.3L546.9 1093.1L548.4 1090.3L549.3 1094.5L550.3 1088.6L551.4 1075.2L552.4 1075.5L553.9 1083.6L554.8 1081.2L556.1 1088.3L557.7 1092.9L558.9 1088.5L560.2 1084.1L561.3 1081.5L562.5 1071.3L563.7 1069.8L564.7 1073.0L565.7 1086.6L567.2 1091.8L568.7 1081.6L569.9 1075.4L571.3 1065.5L572.7 1077.6L574.3 1076.3L575.8 1093.4L577.3 1094.1L578.5 1088.3L579.7 1089.3L580.7 1074.2L581.8 1073.4L582.8 1080.7L584.3 1086.2L585.5 1088.8L586.6 1094.5L588.0 1093.8L589.5 1089.1L590.7 1078.3L591.7 1072.8L593.0 1074.5L594.3 1077.6L595.2 1074.0L596.4 1082.2L597.6 1087.9L598.9 1091.8L600.4 1089.2L601.4 1081.7L602.9 1072.8L604.0 1068.1L605.0 1062.0L606.0 1081.2L607.1 1086.5L608.1 1086.7L609.4 1094.5L610.6 1091.6L611.8 1084.9L612.9 1077.9L614.1 1071.7L615.6 1086.8L617.1 1087.0L618.2 1091.4L619.8 1090.4L620.9 1086.5L621.9 1078.2L623.3 1083.5L624.7 1088.2L626.1 1083.4L627.0 1092.5L628.3 1090.5L629.2 1087.6L630.5 1080.1L631.5 1078.8L633.0 1064.4L634.0 1081.2L635.2 1077.7L636.4 1087.9L637.8 1094.5L639.3 1091.0L640.7 1081.3L641.7 1069.2L643.2 1069.0L644.7 1077.7L646.0 1087.5L647.5 1094.5L648.9 1092.9L650.1 1089.8L651.5 1085.8L652.7 1080.5L653.8 1074.2L655.0 1076.8L656.0 1074.7L657.2 1084.3L658.4 1092.9L659.8 1091.7L661.4 1094.5L662.8 1086.5L663.7 1081.5L664.7 1076.2L666.0 1071.5L667.3 1069.6L668.7 1091.9L670.2 1094.5L671.2 1088.9L672.4 1080.4L674.0 1074.8L675.3 1075.6L676.7 1080.7L678.1 1087.4L679.1 1094.5L680.6 1093.8L682.0 1091.4L683.6 1085.4L684.8 1081.2L685.8 1086.2L687.2 1094.0L688.7 1094.5L690.0 1093.1L691.0 1087.1L692.2 1078.3L693.3 1086.9L694.7 1090.6L696.3 1077.3L697.3 1074.0L698.6 1088.5L700.0 1089.5L701.3 1078.0L702.4 1073.1L703.9 1092.3L705.0 1091.8L706.0 1085.3L706.9 1077.7L708.3 1084.9L709.3 1092.8L710.8 1093.2L712.3 1079.8L713.3 1085.0L714.8 1094.0L716.4 1090.5L717.8 1078.0L719.0 1090.9L719.9 1094.0L721.2 1091.5L722.6 1086.7L724.0 1087.3L725.4 1091.1L726.4 1093.7L727.5 1088.7L728.8 1075.3L730.4 1087.8L731.5 1093.1L733.0 1081.6L734.2 1079.1L735.4 1081.2L736.7 1086.5L738.1 1088.7L739.6 1076.1L740.5 1077.1L741.8 1079.9L743.3 1094.0L744.7 1090.2L746.1 1075.5L747.5 1086.8L748.8 1093.9L750.3 1091.4L751.4 1085.7L752.8 1082.1L754.2 1089.1L755.4 1092.4L756.9 1086.0L758.4 1077.7L759.7 1086.0L760.9 1094.0L762.3 1086.8L763.3 1086.1L764.4 1076.3L765.5 1089.9L767.0 1094.0L768.2 1086.7L769.1 1084.0L770.2 1081.3L771.5 1089.7L772.6 1093.5L773.7 1085.7L774.9 1079.8L776.5 1084.7L778.0 1091.1L779.0 1083.0L780.2 1078.3L781.2 1075.3L782.3 1092.3L783.5 1089.7L784.8 1087.0L785.9 1081.8L787.2 1094.9L788.8 1094.8L790.1 1094.7L791.5 1094.7L793.0 1095.0L794.4 1094.7L795.5 1094.9L796.5 1094.8L797.7 1095.0L799.0 1095.0L800.1 1094.9L801.3 1095.0L802.3 1094.9L803.4 1094.9L804.6 1094.7L806.1 1094.8L807.2 1094.7L808.3 1094.8L809.7 1092.1L810.7 1086.2L812.3 1074.1L813.2 1082.8L814.3 1088.7L815.2 1086.7L816.2 1084.3L817.4 1077.5L818.5 1081.0L819.6 1090.5L820.7 1088.4L822.1 1086.8L823.1 1083.1L824.5 1081.3L825.6 1088.8L826.6 1094.0L827.6 1090.8L829.1 1082.3L830.5 1083.3L831.7 1093.9L832.6 1094.0L834.2 1084.7L835.5 1086.1L836.6 1085.2L837.8 1093.0L839.3 1091.1L840.7 1078.7L841.9 1080.8L843.3 1084.8L844.7 1089.7L846.2 1081.9L847.2 1080.5L848.6 1084.5L849.7 1090.4L851.3 1090.3L852.6 1077.8L853.7 1074.4L855.1 1087.8L856.6 1091.3L857.7 1081.8L858.7 1077.6L859.6 1084.7L861.2 1091.0L862.6 1086.9L863.9 1073.8L864.9 1083.2L866.1 1091.2L867.3 1094.0L868.5 1085.0L869.8 1085.5L871.2 1091.6L872.5 1092.8L873.9 1085.0L875.4 1080.7L876.6 1091.8L877.9 1092.4L879.4 1083.1L880.8 1080.3L882.2 1090.3L883.5 1091.8L884.7 1079.1L885.6 1077.6L886.7 1088.9L887.7 1094.0L889.3 1080.2L890.5 1074.3L891.9 1086.2L892.9 1088.7L894.2 1077.5L895.3 1080.1L896.2 1075.6L897.4 1089.5L898.3 1094.0L899.4 1088.4L901.0 1079.9L902.1 1080.5L903.2 1089.2L904.4 1094.0L906.0 1086.3L907.0 1078.4L908.0 1085.5L909.5 1092.1L910.5 1090.8L911.7 1087.9L912.8 1080.2L913.9 1089.7L915.3 1094.0L916.8 1087.8L918.0 1077.3L919.0 1079.9L920.6 1091.0L921.9 1094.0L923.0 1087.3L924.0 1080.9L925.0 1080.9L926.1 1081.8L927.0 1090.6L928.2 1085.9L929.2 1082.2L930.3 1075.6L931.6 1081.8L933.0 1090.4L934.0 1088.1L935.3 1084.6L936.8 1076.6L937.8 1086.4L939.1 1092.8L940.5 1087.1L942.0 1083.6L942.9 1083.4L944.1 1093.5L945.0 1091.5L946.3 1086.2L947.3 1084.2L948.4 1083.3L949.5 1091.3L951.0 1094.0L952.0 1085.0L953.5 1085.7L954.6 1091.3L955.6 1093.4L957.1 1089.6L958.6 1083.6L960.1 1091.5L961.2 1092.4L962.1 1082.7L963.5 1080.1L964.8 1085.9L966.4 1091.9L968.0 1079.5L969.1 1076.3L970.3 1084.4L971.6 1088.1L972.8 1081.3L974.2 1081.2L975.2 1085.1L976.3 1093.9L977.4 1090.7L978.8 1077.7L979.9 1086.7L981.1 1089.2L982.1 1094.0L983.7 1083.3L984.8 1085.2L986.0 1086.9L987.5 1094.0L988.7 1091.9L989.8 1079.5L990.7 1084.4L991.7 1092.3L992.6 1094.0L993.9 1093.0L995.0 1080.5L996.0 1082.6L997.4 1088.5L998.9 1093.7L1000.0 1088.3L1000.9 1078.2L1002.4 1075.8L1003.8 1085.7L1005.1 1088.3L1006.7 1082.2L1007.6 1077.8L1008.6 1082.3L1009.8 1091.4L1011.0 1091.0L1012.4 1085.3L1013.5 1079.3L1014.8 1082.9L1016.2 1094.0L1017.3 1094.0L1018.3 1085.7L1019.5 1082.5L1020.4 1085.7L1021.7 1094.0L1022.8 1094.0L1024.3 1087.2L1025.9 1080.5L1027.2 1092.0L1028.3 1092.2L1029.5 1086.4L1030.5 1082.7L1031.6 1077.5L1032.7 1090.7L1033.7 1094.0L1034.9 1091.4L1036.3 1079.2L1037.5 1079.0L1038.7 1091.1L1039.8 1089.0L1041.2 1076.5L1042.2 1076.1L1043.5 1086.4L1044.9 1090.5L1046.0 1086.1L1047.2 1080.8L1048.2 1084.7L1049.2 1089.5L1050.4 1093.2L1051.9 1084.6L1053.2 1078.6L1054.6 1093.5L1055.7 1093.1L1057.2 1079.0L1058.4 1081.7L1059.9 1091.6L1061.0 1091.2L1062.1 1089.1L1063.6 1080.3L1065.0 1094.0L1066.2 1089.6L1067.1 1084.3L1068.0 1083.3L1069.6 1092.0L1070.6 1093.1L1071.7 1091.8L1073.2 1081.9L1074.5 1081.0L1075.7 1089.5L1077.2 1091.4L1078.1 1077.1L1079.4 1081.4L1080.3 1082.8L1081.6 1092.4L1082.9 1088.4L1083.8 1084.4L1084.9 1081.2L1086.2 1080.1L1087.7 1091.7L1089.1 1086.1L1090.4 1077.3L1091.5 1078.5L1093.1 1092.9L1094.5 1093.1L1095.5 1087.6L1096.7 1078.8L1098.0 1091.6L1099.5 1094.0L1101.0 1086.9L1102.2 1079.8L1103.6 1081.4L1105.2 1094.0L1106.2 1085.8L1107.6 1086.8L1108.7 1079.2L1109.9 1085.0L1111.0 1089.1L1111.9 1093.2L1113.0 1083.6L1114.4 1081.3L1115.4 1083.1L1116.3 1088.1L1117.4 1090.9L1118.4 1083.0L1119.9 1080.9L1121.1 1076.8L1122.2 1087.8L1123.3 1088.8L1124.5 1085.6L1126.1 1082.0L1127.2 1086.2L1128.5 1089.0L1129.9 1084.3L1130.9 1076.5L1132.1 1084.0L1133.3 1094.0L1134.6 1090.6L1135.9 1082.4L1137.2 1082.2L1138.4 1090.5L1139.6 1091.0L1140.7 1080.9L1142.3 1085.8L1143.8 1093.2L1145.3 1085.6L1146.9 1085.0L1148.3 1092.1L1149.5 1092.3L1150.6 1087.7L1151.5 1078.7L1152.7 1084.9L1154.2 1089.4L1155.8 1081.7L1156.9 1081.0L1158.1 1078.3L1159.1 1091.5L1160.6 1087.4L1161.5 1076.7L1162.8 1074.5L1163.9 1083.8L1164.8 1092.1L1166.1 1090.8L1167.5 1082.9L1168.9 1083.0L1169.9 1086.5L1171.0 1094.0L1172.4 1084.8L1173.5 1082.1L1174.9 1086.9L1176.1 1093.7L1177.6 1093.0L1178.7 1084.4L1180.2 1085.1L1181.6 1091.9L1182.7 1092.5L1184.0 1092.3L1185.1 1082.3L1186.2 1079.7L1187.2 1088.6L1188.8 1094.0L1189.9 1084.7L1191.2 1078.5L1192.7 1086.0L1193.9 1087.9L1195.0 1087.2L1196.0 1084.2L1197.1 1078.2L1198.5 1079.3L1200.1 1086.4L1201.5 1086.4L1203.1 1082.2L1204.3 1080.5L1205.9 1093.9L1206.9 1091.9L1207.9 1087.9L1209.2 1078.1L1210.7 1087.7L1211.7 1090.0L1213.2 1084.8L1214.1 1084.0L1215.4 1088.1L1216.5 1092.6L1217.8 1094.0L1219.0 1087.0L1220.1 1082.6L1221.1 1088.3L1222.4 1091.4L1223.9 1090.1L1225.1 1080.9L1226.6 1084.2L1227.5 1094.0L1229.0 1084.4L1230.2 1082.4L1231.3 1078.4L1232.8 1094.0L1233.8 1089.6L1235.3 1078.7L1236.7 1080.0L1238.0 1091.0L1239.2 1088.1L1240.2 1079.9L1241.5 1082.2L1242.7 1093.5L1243.6 1091.7L1244.8 1087.4L1246.0 1081.3L1247.0 1082.6L1247.9 1092.2L1248.8 1093.0L1250.0 1087.6L1251.1 1080.8L1252.2 1084.6L1253.7 1094.0L1254.7 1094.0L1255.9 1083.1L1257.0 1080.2L1258.6 1087.3L1259.7 1092.0L1261.1 1092.6L1262.0 1081.5L1263.6 1077.5L1265.1 1089.9L1266.0 1090.3L1267.4 1079.4L1268.4 1075.8L1269.8 1083.5L1271.0 1092.7L1272.4 1092.3L1273.9 1077.6L1274.9 1080.8L1276.4 1086.0L1277.5 1091.7L1279.0 1089.3L1280.2 1083.1L1281.4 1078.9L1282.6 1087.8L1284.1 1094.0L1285.1 1086.5L1286.2 1083.9L1287.5 1084.1L1288.8 1090.3L1290.1 1093.2L1291.3 1084.6L1292.4 1079.8L1293.4 1089.8L1294.6 1091.9L1295.9 1092.4L1297.5 1083.1L1298.5 1080.1L1299.7 1086.9L1301.0 1092.7L1302.2 1089.5L1303.6 1076.5L1305.1 1090.1L1306.3 1091.0L1307.8 1081.9L1309.3 1076.9L1310.9 1088.0L1312.4 1085.2L1313.5 1083.1L1314.5 1080.3L1315.5 1086.3L1316.6 1092.9L1318.1 1086.3L1319.6 1078.4L1321.0 1089.9L1322.6 1088.2L1323.5 1079.6L1325.0 1084.7L1326.1 1089.5L1327.4 1093.1L1328.5 1083.3L1330.0 1081.2L1331.5 1094.0L1332.5 1090.9L1334.0 1088.9L1335.0 1085.8L1336.6 1089.0L1338.0 1093.1L1339.3 1087.8L1340.4 1079.9L1341.8 1087.7L1342.8 1092.1L1344.4 1086.5L1345.5 1080.6L1347.0 1077.5L1348.6 1088.0L1349.5 1089.6L1350.9 1079.1L1352.4 1082.7L1354.0 1093.0L1355.5 1081.5L1356.4 1080.4L1357.7 1077.6L1359.2 1090.1L1360.6 1089.3L1361.8 1090.9L1362.7 1081.3L1364.0 1081.0L1365.4 1089.9L1366.9 1094.0L1368.0 1090.2L1369.1 1085.4L1370.2 1082.8L1371.7 1094.0L1372.8 1094.0L1374.2 1085.4L1375.2 1079.6L1376.2 1083.1L1377.4 1090.8L1379.0 1093.2L1380.4 1080.3L1381.9 1080.9L1383.2 1086.3L1384.7 1093.9L1385.8 1086.6L1386.8 1080.0L1388.4 1080.9L1390.0 1093.2L1391.5 1083.6L1392.9 1074.9L1394.5 1090.4L1395.4 1092.9L1396.4 1088.4L1397.3 1081.4L1398.3 1080.8L1399.6 1088.9L1401.2 1093.7L1402.1 1085.6L1403.7 1083.8L1404.8 1091.9L1406.3 1088.9L1407.6 1080.2L1408.6 1079.2L1409.5 1087.7L1410.5 1094.0L1411.9 1087.6L1412.9 1079.2L1414.3 1085.9L1415.2 1093.2L1416.3 1092.0L1417.5 1083.2L1418.7 1075.7L1419.9 1085.7L1421.0 1088.7L1422.5 1081.7L1423.6 1077.9L1424.7 1083.3L1425.7 1087.5L1427.3 1090.7L1428.7 1080.5L1429.9 1074.7L1431.1 1091.3L1432.2 1090.9L1433.4 1089.8L1434.6 1077.7L1435.7 1081.7L1437.2 1093.2L1438.6 1093.1L1439.9 1084.2L1441.5 1082.9L1442.6 1087.6L1443.7 1094.0L1445.2 1086.6L1446.7 1080.2L1448.1 1085.5L1449.2 1091.4L1450.2 1086.7L1451.5 1087.9L1452.8 1077.1L1454.2 1090.4L1455.1 1088.4L1456.3 1094.0L1457.7 1078.6L1458.7 1076.5L1460.2 1082.7L1461.7 1090.9L1463.0 1085.6L1464.2 1082.3L1465.6 1083.5L1467.1 1088.8L1468.2 1091.1L1469.6 1078.4L1470.7 1074.1L1471.8 1081.5L1473.4 1090.0L1474.5 1086.7L1475.4 1077.4L1476.6 1079.8L1477.7 1089.4L1478.8 1094.0L1479.9 1088.3L1481.3 1082.2L1482.3 1086.3L1483.3 1093.4L1484.8 1092.1L1486.3 1078.6L1487.6 1081.7L1488.6 1091.1L1489.6 1093.2L1491.0 1081.9L1492.5 1081.2L1493.7 1091.7L1494.9 1088.2L1495.9 1088.5L1497.3 1079.4L1498.5 1086.0L1499.6 1090.3L1501.0 1087.8L1502.0 1081.6L1502.9 1083.4L1504.1 1091.9L1505.6 1088.4L1506.7 1075.2L1507.8 1080.8L1509.1 1088.2L1510.6 1092.6L1512.0 1082.1L1513.2 1080.4L1514.5 1090.4L1516.0 1093.0L1517.5 1084.0L1519.0 1079.2L1520.2 1090.6L1521.3 1092.9L1522.7 1086.4L1524.0 1084.4L1525.3 1083.8L1526.7 1094.0L1528.1 1091.4L1529.2 1083.3L1530.2 1077.5L1531.5 1086.3L1532.7 1092.3L1534.2 1085.0L1535.2 1077.9L1536.5 1075.7L1538.0 1090.7L1539.5 1091.2L1540.8 1080.8L1542.1 1073.7L1543.2 1081.2L1544.2 1089.2L1545.5 1085.3L1547.1 1080.9L1548.0 1080.0L1549.4 1084.0L1550.5 1093.1L1551.4 1091.9L1552.4 1086.5L1554.0 1082.9L1555.0 1090.1L1556.4 1094.0L1557.8 1093.0L1559.3 1084.3L1560.7 1089.5L1561.7 1094.0L1562.9 1090.3L1564.2 1079.1L1565.3 1081.3L1566.9 1093.4L1568.1 1090.6L1569.4 1086.2L1570.8 1083.9L1572.4 1093.3L1573.4 1089.5L1574.8 1084.8L1576.1 1078.6L1577.0 1087.5L1578.3 1088.1L1579.3 1089.5L1580.3 1080.0L1581.7 1083.3L1582.8 1089.4L1584.0 1091.2L1585.1 1085.4L1586.4 1081.2L1587.9 1090.6L1589.0 1088.4L1590.3 1080.9L1591.6 1081.8L1592.8 1090.7L1594.1 1091.3L1595.1 1091.1L1596.1 1079.1L1597.2 1087.3L1598.7 1092.8L1600.1 1091.4L1601.4 1079.1L1602.9 1084.2L1604.0 1090.0L1605.2 1093.5L1606.5 1078.8L1608.1 1087.2L1609.3 1089.6L1610.6 1088.5L1612.0 1081.6L1613.0 1078.6L1614.4 1087.1L1615.7 1092.3L1617.0 1090.9L1618.4 1080.6L1619.8 1082.0L1621.1 1092.3L1622.2 1088.2L1623.6 1086.6L1625.1 1081.6L1626.0 1086.1L1627.6 1093.4L1629.0 1091.1L1630.4 1076.9L1631.7 1084.2L1632.7 1088.9L1634.0 1090.8L1635.1 1086.6L1636.0 1086.7L1637.1 1079.2L1638.7 1090.4L1639.9 1093.1L1640.8 1091.1L1642.1 1086.7L1643.7 1086.4L1644.7 1091.1L1645.7 1093.3L1647.1 1084.6L1648.2 1077.4L1649.7 1089.8L1650.9 1089.3L1652.3 1083.8L1653.3 1076.0L1654.3 1082.7L1655.8 1089.9L1656.7 1088.0L1658.3 1085.0L1659.4 1080.2L1660.4 1082.6L1661.4 1090.4L1662.4 1089.4L1663.6 1081.7L1664.9 1082.7L1665.8 1083.7L1667.0 1092.5L1668.0 1090.3L1669.2 1079.4L1670.1 1083.7L1671.5 1090.1L1673.1 1093.6L1674.6 1079.6L1676.2 1087.4L1677.3 1093.8L1678.8 1086.9L1680.4 1079.4L1682.0 1094.0L1683.3 1094.0L1684.3 1083.9L1685.4 1079.0L1686.6 1083.2L1687.7 1093.1L1688.7 1087.3L1690.0 1077.8L1690.9 1082.6L1692.0 1079.7L1692.9 1088.4L1694.2 1087.2L1695.7 1079.0L1696.9 1080.6L1698.1 1086.2L1699.6 1086.7L1700.9 1085.3L1702.1 1081.1L1703.4 1083.9L1704.3 1094.0L1705.6 1089.0L1706.8 1080.7L1707.8 1079.1L1708.9 1088.4L1709.8 1090.8L1711.2 1091.8L1712.1 1088.7L1713.7 1081.5L1715.2 1085.9L1716.3 1091.6L1717.5 1094.0L1718.6 1086.3L1719.8 1085.2L1721.2 1084.8L1722.6 1094.0L1723.9 1087.7L1725.4 1080.1L1726.6 1082.7L1727.6 1088.5L1729.0 1093.8L1730.1 1084.3L1731.4 1079.5L1732.9 1081.5L1734.4 1091.0L1735.4 1084.6L1736.3 1079.3L1737.6 1076.7L1739.1 1089.6L1740.6 1093.6L1741.9 1082.2L1743.4 1083.7L1744.7 1091.2L1746.2 1093.3L1747.2 1080.8L1748.5 1083.6L1750.0 1090.5L1751.3 1094.0L1752.9 1079.7L1754.1 1086.6L1755.6 1092.3L1756.8 1090.3L1758.0 1086.1L1759.0 1079.3L1760.4 1092.5L1761.4 1089.5L1762.4 1085.3L1763.7 1076.7L1765.2 1083.6L1766.6 1092.4L1767.7 1082.6L1768.9 1074.1L1770.2 1081.6L1771.6 1092.7L1772.6 1084.2L1773.7 1079.6L1774.7 1076.9L1775.6 1087.3L1776.7 1088.2L1777.9 1090.2L1779.1 1081.6L1780.0 1078.1L1781.2 1089.8L1782.1 1090.4L1783.0 1092.1L1784.2 1088.8L1785.3 1076.3L1786.9 1086.4L1787.8 1092.0L1789.1 1094.0L1790.3 1086.7L1791.6 1079.8L1793.1 1091.3L1794.5 1092.4L1795.8 1086.7L1797.2 1079.6L1798.6 1086.3L1799.6 1094.0L1801.2 1089.7L1802.4 1079.4L1803.9 1083.4L1805.3 1094.0L1806.3 1088.0L1807.4 1082.6L1808.7 1078.1L1809.8 1080.3L1811.2 1092.1L1812.2 1090.4L1813.1 1082.1L1814.3 1081.9L1815.8 1084.5L1817.3 1087.8L1818.3 1093.5L1819.8 1078.0L1820.8 1081.1L1822.2 1086.4L1823.4 1093.8L1824.5 1090.5L1825.9 1083.4L1826.9 1087.7L1828.1 1094.0L1829.3 1091.2L1830.2 1091.2L1831.3 1085.7L1832.8 1088.0L1833.8 1094.0L1834.9 1091.7L1835.8 1089.5L1837.3 1078.6L1838.5 1089.4L1839.9 1093.9L1841.5 1080.8L1843.0 1084.3L1844.1 1086.6L1845.2 1091.3L1846.6 1083.6L1848.1 1079.1L1849.2 1089.6L1850.7 1087.9L1851.7 1083.6L1852.8 1080.2L1853.7 1084.4L1854.9 1090.9L1855.8 1088.9L1857.1 1082.6L1858.0 1081.2L1859.0 1089.4L1859.9 1089.1L1861.1 1087.7L1862.1 1083.0L1863.3 1082.7L1864.6 1086.7L1866.1 1092.7L1867.3 1087.7L1868.6 1079.0L1869.5 1083.3L1870.9 1090.7L1872.1 1093.6L1873.1 1085.5L1874.5 1081.3L1875.6 1080.1L1876.7 1091.1L1878.2 1091.1L1879.5 1077.7L1881.1 1082.4L1882.3 1091.5L1883.9 1085.1L1885.1 1082.3L1886.0 1078.7L1887.3 1083.6L1888.8 1087.5L1890.3 1087.9L1891.5 1076.9L1892.7 1075.2L1893.6 1089.7L1895.0 1089.6L1896.1 1090.9L1897.6 1082.3L1899.2 1081.2L1900.4 1091.2L1901.7 1093.9L1903.0 1085.7L1904.0 1077.4L1905.1 1083.2L1906.6 1092.3L1908.1 1088.8L1909.5 1078.6L1910.5 1088.2L1911.7 1089.4L1912.9 1091.8L1914.3 1085.0L1915.2 1076.2L1916.7 1087.9L1917.9 1091.1L1918.9 1092.4L1920.0 1082.7L1921.2 1077.3L1922.5 1092.5L1923.9 1087.8L1925.0 1082.5L1926.4 1082.2L1927.9 1088.0L1929.4 1084.3L1931.0 1074.3L1932.3 1083.1L1933.6 1089.2L1935.1 1084.6L1936.4 1076.6L1938.0 1090.9L1939.2 1094.0L1940.3 1082.7L1941.4 1079.8L1942.5 1087.6L1943.9 1094.0L1945.0 1088.0L1946.3 1081.3L1947.4 1080.2L1948.6 1092.1L1949.9 1094.0L1951.0 1083.0L1952.4 1080.0L1953.8 1093.0L1955.2 1089.4L1956.7 1085.2L1958.0 1078.1L1959.6 1089.2L1961.2 1089.8L1962.5 1081.3L1963.7 1076.8L1965.0 1083.4L1966.5 1087.0L1968.0 1085.1L1969.0 1081.4L1970.0 1079.3L1970.9 1085.5L1972.4 1089.5L1973.6 1089.7L1974.5 1080.4L1975.9 1086.6L1977.3 1093.5L1978.6 1093.6L1979.7 1088.9L1980.8 1079.3L1981.9 1088.8L1983.3 1089.7L1984.2 1094.0L1985.6 1087.3L1986.6 1094.0L1990.0 1094.6L2046.0 1094.4L2046 1099.0L448.3 1099.0Z" fill="#4572A7" fill-opacity="0.05"/>
<rect x="531.4" y="1060" width="79.9" height="39" fill="rgb(128,179,236)" fill-opacity="0.3"/>
<path d="M448.3 1088.7L449.8 1080.6L451.2 1084.4L452.5 1082.2L453.6 1094.5L455.0 1094.5L456.6 1090.8L457.6 1092.5L458.5 1084.7L459.4 1076.7L460.9 1077.4L462.2 1081.9L463.3 1082.5L464.8 1088.6L465.8 1091.0L467.3 1081.4L468.4 1065.3L469.3 1074.9L470.6 1064.4L471.5 1073.8L472.6 1088.4L474.2 1086.9L475.3 1094.5L476.7 1094.0L477.9 1090.1L478.9 1079.5L480.1 1082.3L481.7 1073.8L483.2 1089.0L484.7 1090.7L486.3 1094.5L487.7 1094.5L488.7 1094.5L489.8 1085.3L491.0 1072.6L492.3 1070.3L493.3 1071.0L494.4 1086.6L495.9 1093.1L497.4 1090.4L498.4 1094.2L499.5 1079.9L501.0 1071.5L502.0 1066.2L503.0 1071.1L504.4 1084.0L505.4 1093.4L506.6 1094.5L507.8 1088.4L508.9 1077.5L510.3 1073.1L511.3 1076.2L512.8 1079.2L513.7 1086.8L515.2 1094.5L516.1 1094.5L517.6 1088.6L519.1 1077.1L520.5 1072.7L521.7 1076.6L523.0 1085.6L524.3 1091.6L525.6 1088.8L527.0 1092.7L528.3 1085.2L529.3 1068.3L530.6 1072.7L532.0 1072.4L533.6 1076.3L534.7 1081.7L535.7 1082.6L536.9 1084.9L538.3 1092.0L539.7 1075.8L540.9 1075.3L541.9 1073.7L543.4 1071.3L544.5 1084.7L545.6 1090.3L546.9 1093.1L548.4 1090.3L549.3 1094.5L550.3 1088.6L551.4 1075.2L552.4 1075.5L553.9 1083.6L554.8 1081.2L556.1 1088.3L557.7 1092.9L558.9 1088.5L560.2 1084.1L561.3 1081.5L562.5 1071.3L563.7 1069.8L564.7 1073.0L565.7 1086.6L567.2 1091.8L568.7 1081.6L569.9 1075.4L571.3 1065.5L572.7 1077.6L574.3 1076.3L575.8 1093.4L577.3 1094.1L578.5 1088.3L579.7 1089.3L580.7 1074.2L581.8 1073.4L582.8 1080.7L584.3 1086.2L585.5 1088.8L586.6 1094.5L588.0 1093.8L589.5 1089.1L590.7 1078.3L591.7 1072.8L593.0 1074.5L594.3 1077.6L595.2 1074.0L596.4 1082.2L597.6 1087.9L598.9 1091.8L600.4 1089.2L601.4 1081.7L602.9 1072.8L604.0 1068.1L605.0 1062.0L606.0 1081.2L607.1 1086.5L608.1 1086.7L609.4 1094.5L610.6 1091.6L611.8 1084.9L612.9 1077.9L614.1 1071.7L615.6 1086.8L617.1 1087.0L618.2 1091.4L619.8 1090.4L620.9 1086.5L621.9 1078.2L623.3 1083.5L624.7 1088.2L626.1 1083.4L627.0 1092.5L628.3 1090.5L629.2 1087.6L630.5 1080.1L631.5 1078.8L633.0 1064.4L634.0 1081.2L635.2 1077.7L636.4 1087.9L637.8 1094.5L639.3 1091.0L640.7 1081.3L641.7 1069.2L643.2 1069.0L644.7 1077.7L646.0 1087.5L647.5 1094.5L648.9 1092.9L650.1 1089.8L651.5 1085.8L652.7 1080.5L653.8 1074.2L655.0 1076.8L656.0 1074.7L657.2 1084.3L658.4 1092.9L659.8 1091.7L661.4 1094.5L662.8 1086.5L663.7 1081.5L664.7 1076.2L666.0 1071.5L667.3 1069.6L668.7 1091.9L670.2 1094.5L671.2 1088.9L672.4 1080.4L674.0 1074.8L675.3 1075.6L676.7 1080.7L678.1 1087.4L679.1 1094.5L680.6 1093.8L682.0 1091.4L683.6 1085.4L684.8 1081.2L685.8 1086.2L687.2 1094.0L688.7 1094.5L690.0 1093.1L691.0 1087.1L692.2 1078.3L693.3 1086.9L694.7 1090.6L696.3 1077.3L697.3 1074.0L698.6 1088.5L700.0 1089.5L701.3 1078.0L702.4 1073.1L703.9 1092.3L705.0 1091.8L706.0 1085.3L706.9 1077.7L708.3 1084.9L709.3 1092.8L710.8 1093.2L712.3 1079.8L713.3 1085.0L714.8 1094.0L716.4 1090.5L717.8 1078.0L719.0 1090.9L719.9 1094.0L721.2 1091.5L722.6 1086.7L724.0 1087.3L725.4 1091.1L726.4 1093.7L727.5 1088.7L728.8 1075.3L730.4 1087.8L731.5 1093.1L733.0 1081.6L734.2 1079.1L735.4 1081.2L736.7 1086.5L738.1 1088.7L739.6 1076.1L740.5 1077.1L741.8 1079.9L743.3 1094.0L744.7 1090.2L746.1 1075.5L747.5 1086.8L748.8 1093.9L750.3 1091.4L751.4 1085.7L752.8 1082.1L754.2 1089.1L755.4 1092.4L756.9 1086.0L758.4 1077.7L759.7 1086.0L760.9 1094.0L762.3 1086.8L763.3 1086.1L764.4 1076.3L765.5 1089.9L767.0 1094.0L768.2 1086.7L769.1 1084.0L770.2 1081.3L771.5 1089.7L772.6 1093.5L773.7 1085.7L774.9 1079.8L776.5 1084.7L778.0 1091.1L779.0 1083.0L780.2 1078.3L781.2 1075.3L782.3 1092.3L783.5 1089.7L784.8 1087.0L785.9 1081.8L787.2 1094.9L788.8 1094.8L790.1 1094.7L791.5 1094.7L793.0 1095.0L794.4 1094.7L795.5 1094.9L796.5 1094.8L797.7 1095.0L799.0 1095.0L800.1 1094.9L801.3 1095.0L802.3 1094.9L803.4 1094.9L804.6 1094.7L806.1 1094.8L807.2 1094.7L808.3 1094.8L809.7 1092.1L810.7 1086.2L812.3 1074.1L813.2 1082.8L814.3 1088.7L815.2 1086.7L816.2 1084.3L817.4 1077.5L818.5 1081.0L819.6 1090.5L820.7 1088.4L822.1 1086.8L823.1 1083.1L824.5 1081.3L825.6 1088.8L826.6 1094.0L827.6 1090.8L829.1 1082.3L830.5 1083.3L831.7 1093.9L832.6 1094.0L834.2 1084.7L835.5 1086.1L836.6 1085.2L837.8 1093.0L839.3 1091.1L840.7 1078.7L841.9 1080.8L843.3 1084.8L844.7 1089.7L846.2 1081.9L847.2 1080.5L848.6 1084.5L849.7 1090.4L851.3 1090.3L852.6 1077.8L853.7 1074.4L855.1 1087.8L856.6 1091.3L857.7 1081.8L858.7 1077.6L859.6 1084.7L861.2 1091.0L862.6 1086.9L863.9 1073.8L864.9 1083.2L866.1 1091.2L867.3 1094.0L868.5 1085.0L869.8 1085.5L871.2 1091.6L872.5 1092.8L873.9 1085.0L875.4 1080.7L876.6 1091.8L877.9 1092.4L879.4 1083.1L880.8 1080.3L882.2 1090.3L883.5 1091.8L884.7 1079.1L885.6 1077.6L886.7 1088.9L887.7 1094.0L889.3 1080.2L890.5 1074.3L891.9 1086.2L892.9 1088.7L894.2 1077.5L895.3 1080.1L896.2 1075.6L897.4 1089.5L898.3 1094.0L899.4 1088.4L901.0 1079.9L902.1 1080.5L903.2 1089.2L904.4 1094.0L906.0 1086.3L907.0 1078.4L908.0 1085.5L909.5 1092.1L910.5 1090.8L911.7 1087.9L912.8 1080.2L913.9 1089.7L915.3 1094.0L916.8 1087.8L918.0 1077.3L919.0 1079.9L920.6 1091.0L921.9 1094.0L923.0 1087.3L924.0 1080.9L925.0 1080.9L926.1 1081.8L927.0 1090.6L928.2 1085.9L929.2 1082.2L930.3 1075.6L931.6 1081.8L933.0 1090.4L934.0 1088.1L935.3 1084.6L936.8 1076.6L937.8 1086.4L939.1 1092.8L940.5 1087.1L942.0 1083.6L942.9 1083.4L944.1 1093.5L945.0 1091.5L946.3 1086.2L947.3 1084.2L948.4 1083.3L949.5 1091.3L951.0 1094.0L952.0 1085.0L953.5 1085.7L954.6 1091.3L955.6 1093.4L957.1 1089.6L958.6 1083.6L960.1 1091.5L961.2 1092.4L962.1 1082.7L963.5 1080.1L964.8 1085.9L966.4 1091.9L968.0 1079.5L969.1 1076.3L970.3 1084.4L971.6 1088.1L972.8 1081.3L974.2 1081.2L975.2 1085.1L976.3 1093.9L977.4 1090.7L978.8 1077.7L979.9 1086.7L981.1 1089.2L982.1 1094.0L983.7 1083.3L984.8 1085.2L986.0 1086.9L987.5 1094.0L988.7 1091.9L989.8 1079.5L990.7 1084.4L991.7 1092.3L992.6 1094.0L993.9 1093.0L995.0 1080.5L996.0 1082.6L997.4 1088.5L998.9 1093.7L1000.0 1088.3L1000.9 1078.2L1002.4 1075.8L1003.8 1085.7L1005.1 1088.3L1006.7 1082.2L1007.6 1077.8L1008.6 1082.3L1009.8 1091.4L1011.0 1091.0L1012.4 1085.3L1013.5 1079.3L1014.8 1082.9L1016.2 1094.0L1017.3 1094.0L1018.3 1085.7L1019.5 1082.5L1020.4 1085.7L1021.7 1094.0L1022.8 1094.0L1024.3 1087.2L1025.9 1080.5L1027.2 1092.0L1028.3 1092.2L1029.5 1086.4L1030.5 1082.7L1031.6 1077.5L1032.7 1090.7L1033.7 1094.0L1034.9 1091.4L1036.3 1079.2L1037.5 1079.0L1038.7 1091.1L1039.8 1089.0L1041.2 1076.5L1042.2 1076.1L1043.5 1086.4L1044.9 1090.5L1046.0 1086.1L1047.2 1080.8L1048.2 1084.7L1049.2 1089.5L1050.4 1093.2L1051.9 1084.6L1053.2 1078.6L1054.6 1093.5L1055.7 1093.1L1057.2 1079.0L1058.4 1081.7L1059.9 1091.6L1061.0 1091.2L1062.1 1089.1L1063.6 1080.3L1065.0 1094.0L1066.2 1089.6L1067.1 1084.3L1068.0 1083.3L1069.6 1092.0L1070.6 1093.1L1071.7 1091.8L1073.2 1081.9L1074.5 1081.0L1075.7 1089.5L1077.2 1091.4L1078.1 1077.1L1079.4 1081.4L1080.3 1082.8L1081.6 1092.4L1082.9 1088.4L1083.8 1084.4L1084.9 1081.2L1086.2 1080.1L1087.7 1091.7L1089.1 1086.1L1090.4 1077.3L1091.5 1078.5L1093.1 1092.9L1094.5 1093.1L1095.5 1087.6L1096.7 1078.8L1098.0 1091.6L1099.5 1094.0L1101.0 1086.9L1102.2 1079.8L1103.6 1081.4L1105.2 1094.0L1106.2 1085.8L1107.6 1086.8L1108.7 1079.2L1109.9 1085.0L1111.0 1089.1L1111.9 1093.2L1113.0 1083.6L1114.4 1081.3L1115.4 1083.1L1116.3 1088.1L1117.4 1090.9L1118.4 1083.0L1119.9 1080.9L1121.1 1076.8L1122.2 1087.8L1123.3 1088.8L1124.5 1085.6L1126.1 1082.0L1127.2 1086.2L1128.5 1089.0L1129.9 1084.3L1130.9 1076.5L1132.1 1084.0L1133.3 1094.0L1134.6 1090.6L1135.9 1082.4L1137.2 1082.2L1138.4 1090.5L1139.6 1091.0L1140.7 1080.9L1142.3 1085.8L1143.8 1093.2L1145.3 1085.6L1146.9 1085.0L1148.3 1092.1L1149.5 1092.3L1150.6 1087.7L1151.5 1078.7L1152.7 1084.9L1154.2 1089.4L1155.8 1081.7L1156.9 1081.0L1158.1 1078.3L1159.1 1091.5L1160.6 1087.4L1161.5 1076.7L1162.8 1074.5L1163.9 1083.8L1164.8 1092.1L1166.1 1090.8L1167.5 1082.9L1168.9 1083.0L1169.9 1086.5L1171.0 1094.0L1172.4 1084.8L1173.5 1082.1L1174.9 1086.9L1176.1 1093.7L1177.6 1093.0L1178.7 1084.4L1180.2 1085.1L1181.6 1091.9L1182.7 1092.5L1184.0 1092.3L1185.1 1082.3L1186.2 1079.7L1187.2 1088.6L1188.8 1094.0L1189.9 1084.7L1191.2 1078.5L1192.7 1086.0L1193.9 1087.9L1195.0 1087.2L1196.0 1084.2L1197.1 1078.2L1198.5 1079.3L1200.1 1086.4L1201.5 1086.4L1203.1 1082.2L1204.3 1080.5L1205.9 1093.9L1206.9 1091.9L1207.9 1087.9L1209.2 1078.1L1210.7 1087.7L1211.7 1090.0L1213.2 1084.8L1214.1 1084.0L1215.4 1088.1L1216.5 1092.6L1217.8 1094.0L1219.0 1087.0L1220.1 1082.6L1221.1 1088.3L1222.4 1091.4L1223.9 1090.1L1225.1 1080.9L1226.6 1084.2L1227.5 1094.0L1229.0 1084.4L1230.2 1082.4L1231.3 1078.4L1232.8 1094.0L1233.8 1089.6L1235.3 1078.7L1236.7 1080.0L1238.0 1091.0L1239.2 1088.1L1240.2 1079.9L1241.5 1082.2L1242.7 1093.5L1243.6 1091.7L1244.8 1087.4L1246.0 1081.3L1247.0 1082.6L1247.9 1092.2L1248.8 1093.0L1250.0 1087.6L1251.1 1080.8L1252.2 1084.6L1253.7 1094.0L1254.7 1094.0L1255.9 1083.1L1257.0 1080.2L1258.6 1087.3L1259.7 1092.0L1261.1 1092.6L1262.0 1081.5L1263.6 1077.5L1265.1 1089.9L1266.0 1090.3L1267.4 1079.4L1268.4 1075.8L1269.8 1083.5L1271.0 1092.7L1272.4 1092.3L1273.9 1077.6L1274.9 1080.8L1276.4 1086.0L1277.5 1091.7L1279.0 1089.3L1280.2 1083.1L1281.4 1078.9L1282.6 1087.8L1284.1 1094.0L1285.1 1086.5L1286.2 1083.9L1287.5 1084.1L1288.8 1090.3L1290.1 1093.2L1291.3 1084.6L1292.4 1079.8L1293.4 1089.8L1294.6 1091.9L1295.9 1092.4L1297.5 1083.1L1298.5 1080.1L1299.7 1086.9L1301.0 1092.7L1302.2 1089.5L1303.6 1076.5L1305.1 1090.1L1306.3 1091.0L1307.8 1081.9L1309.3 1076.9L1310.9 1088.0L1312.4 1085.2L1313.5 1083.1L1314.5 1080.3L1315.5 1086.3L1316.6 1092.9L1318.1 1086.3L1319.6 1078.4L1321.0 1089.9L1322.6 1088.2L1323.5 1079.6L1325.0 1084.7L1326.1 1089.5L1327.4 1093.1L1328.5 1083.3L1330.0 1081.2L1331.5 1094.0L1332.5 1090.9L1334.0 1088.9L1335.0 1085.8L1336.6 1089.0L1338.0 1093.1L1339.3 1087.8L1340.4 1079.9L1341.8 1087.7L1342.8 1092.1L1344.4 1086.5L1345.5 1080.6L1347.0 1077.5L1348.6 1088.0L1349.5 1089.6L1350.9 1079.1L1352.4 1082.7L1354.0 1093.0L1355.5 1081.5L1356.4 1080.4L1357.7 1077.6L1359.2 1090.1L1360.6 1089.3L1361.8 1090.9L1362.7 1081.3L1364.0 1081.0L1365.4 1089.9L1366.9 1094.0L1368.0 1090.2L1369.1 1085.4L1370.2 1082.8L1371.7 1094.0L1372.8 1094.0L1374.2 1085.4L1375.2 1079.6L1376.2 1083.1L1377.4 1090.8L1379.0 1093.2L1380.4 1080.3L1381.9 1080.9L1383.2 1086.3L1384.7 1093.9L1385.8 1086.6L1386.8 1080.0L1388.4 1080.9L1390.0 1093.2L1391.5 1083.6L1392.9 1074.9L1394.5 1090.4L1395.4 1092.9L1396.4 1088.4L1397.3 1081.4L1398.3 1080.8L1399.6 1088.9L1401.2 1093.7L1402.1 1085.6L1403.7 1083.8L1404.8 1091.9L1406.3 1088.9L1407.6 1080.2L1408.6 1079.2L1409.5 1087.7L1410.5 1094.0L1411.9 1087.6L1412.9 1079.2L1414.3 1085.9L1415.2 1093.2L1416.3 1092.0L1417.5 1083.2L1418.7 1075.7L1419.9 1085.7L1421.0 1088.7L1422.5 1081.7L1423.6 1077.9L1424.7 1083.3L1425.7 1087.5L1427.3 1090.7L1428.7 1080.5L1429.9 1074.7L1431.1 1091.3L1432.2 1090.9L1433.4 1089.8L1434.6 1077.7L1435.7 1081.7L1437.2 1093.2L1438.6 1093.1L1439.9 1084.2L1441.5 1082.9L1442.6 1087.6L1443.7 1094.0L1445.2 1086.6L1446.7 1080.2L1448.1 1085.5L1449.2 1091.4L1450.2 1086.7L1451.5 1087.9L1452.8 1077.1L1454.2 1090.4L1455.1 1088.4L1456.3 1094.0L1457.7 1078.6L1458.7 1076.5L1460.2 1082.7L1461.7 1090.9L1463.0 1085.6L1464.2 1082.3L1465.6 1083.5L1467.1 1088.8L1468.2 1091.1L1469.6 1078.4L1470.7 1074.1L1471.8 1081.5L1473.4 1090.0L1474.5 1086.7L1475.4 1077.4L1476.6 1079.8L1477.7 1089.4L1478.8 1094.0L1479.9 1088.3L1481.3 1082.2L1482.3 1086.3L1483.3 1093.4L1484.8 1092.1L1486.3 1078.6L1487.6 1081.7L1488.6 1091.1L1489.6 1093.2L1491.0 1081.9L1492.5 1081.2L1493.7 1091.7L1494.9 1088.2L1495.9 1088.5L1497.3 1079.4L1498.5 1086.0L1499.6 1090.3L1501.0 1087.8L1502.0 1081.6L1502.9 1083.4L1504.1 1091.9L1505.6 1088.4L1506.7 1075.2L1507.8 1080.8L1509.1 1088.2L1510.6 1092.6L1512.0 1082.1L1513.2 1080.4L1514.5 1090.4L1516.0 1093.0L1517.5 1084.0L1519.0 1079.2L1520.2 1090.6L1521.3 1092.9L1522.7 1086.4L1524.0 1084.4L1525.3 1083.8L1526.7 1094.0L1528.1 1091.4L1529.2 1083.3L1530.2 1077.5L1531.5 1086.3L1532.7 1092.3L1534.2 1085.0L1535.2 1077.9L1536.5 1075.7L1538.0 1090.7L1539.5 1091.2L1540.8 1080.8L1542.1 1073.7L1543.2 1081.2L1544.2 1089.2L1545.5 1085.3L1547.1 1080.9L1548.0 1080.0L1549.4 1084.0L1550.5 1093.1L1551.4 1091.9L1552.4 1086.5L1554.0 1082.9L1555.0 1090.1L1556.4 1094.0L1557.8 1093.0L1559.3 1084.3L1560.7 1089.5L1561.7 1094.0L1562.9 1090.3L1564.2 1079.1L1565.3 1081.3L1566.9 1093.4L1568.1 1090.6L1569.4 1086.2L1570.8 1083.9L1572.4 1093.3L1573.4 1089.5L1574.8 1084.8L1576.1 1078.6L1577.0 1087.5L1578.3 1088.1L1579.3 1089.5L1580.3 1080.0L1581.7 1083.3L1582.8 1089.4L1584.0 1091.2L1585.1 1085.4L1586.4 1081.2L1587.9 1090.6L1589.0 1088.4L1590.3 1080.9L1591.6 1081.8L1592.8 1090.7L1594.1 1091.3L1595.1 1091.1L1596.1 1079.1L1597.2 1087.3L1598.7 1092.8L1600.1 1091.4L1601.4 1079.1L1602.9 1084.2L1604.0 1090.0L1605.2 1093.5L1606.5 1078.8L1608.1 1087.2L1609.3 1089.6L1610.6 1088.5L1612.0 1081.6L1613.0 1078.6L1614.4 1087.1L1615.7 1092.3L1617.0 1090.9L1618.4 1080.6L1619.8 1082.0L1621.1 1092.3L1622.2 1088.2L1623.6 1086.6L1625.1 1081.6L1626.0 1086.1L1627.6 1093.4L1629.0 1091.1L1630.4 1076.9L1631.7 1084.2L1632.7 1088.9L1634.0 1090.8L1635.1 1086.6L1636.0 1086.7L1637.1 1079.2L1638.7 1090.4L1639.9 1093.1L1640.8 1091.1L1642.1 1086.7L1643.7 1086.4L1644.7 1091.1L1645.7 1093.3L1647.1 1084.6L1648.2 1077.4L1649.7 1089.8L1650.9 1089.3L1652.3 1083.8L1653.3 1076.0L1654.3 1082.7L1655.8 1089.9L1656.7 1088.0L1658.3 1085.0L1659.4 1080.2L1660.4 1082.6L1661.4 1090.4L1662.4 1089.4L1663.6 1081.7L1664.9 1082.7L1665.8 1083.7L1667.0 1092.5L1668.0 1090.3L1669.2 1079.4L1670.1 1083.7L1671.5 1090.1L1673.1 1093.6L1674.6 1079.6L1676.2 1087.4L1677.3 1093.8L1678.8 1086.9L1680.4 1079.4L1682.0 1094.0L1683.3 1094.0L1684.3 1083.9L1685.4 1079.0L1686.6 1083.2L1687.7 1093.1L1688.7 1087.3L1690.0 1077.8L1690.9 1082.6L1692.0 1079.7L1692.9 1088.4L1694.2 1087.2L1695.7 1079.0L1696.9 1080.6L1698.1 1086.2L1699.6 1086.7L1700.9 1085.3L1702.1 1081.1L1703.4 1083.9L1704.3 1094.0L1705.6 1089.0L1706.8 1080.7L1707.8 1079.1L1708.9 1088.4L1709.8 1090.8L1711.2 1091.8L1712.1 1088.7L1713.7 1081.5L1715.2 1085.9L1716.3 1091.6L1717.5 1094.0L1718.6 1086.3L1719.8 1085.2L1721.2 1084.8L1722.6 1094.0L1723.9 1087.7L1725.4 1080.1L1726.6 1082.7L1727.6 1088.5L1729.0 1093.8L1730.1 1084.3L1731.4 1079.5L1732.9 1081.5L1734.4 1091.0L1735.4 1084.6L1736.3 1079.3L1737.6 1076.7L1739.1 1089.6L1740.6 1093.6L1741.9 1082.2L1743.4 1083.7L1744.7 1091.2L1746.2 1093.3L1747.2 1080.8L1748.5 1083.6L1750.0 1090.5L1751.3 1094.0L1752.9 1079.7L1754.1 1086.6L1755.6 1092.3L1756.8 1090.3L1758.0 1086.1L1759.0 1079.3L1760.4 1092.5L1761.4 1089.5L1762.4 1085.3L1763.7 1076.7L1765.2 1083.6L1766.6 1092.4L1767.7 1082.6L1768.9 1074.1L1770.2 1081.6L1771.6 1092.7L1772.6 1084.2L1773.7 1079.6L1774.7 1076.9L1775.6 1087.3L1776.7 1088.2L1777.9 1090.2L1779.1 1081.6L1780.0 1078.1L1781.2 1089.8L1782.1 1090.4L1783.0 1092.1L1784.2 1088.8L1785.3 1076.3L1786.9 1086.4L1787.8 1092.0L1789.1 1094.0L1790.3 1086.7L1791.6 1079.8L1793.1 1091.3L1794.5 1092.4L1795.8 1086.7L1797.2 1079.6L1798.6 1086.3L1799.6 1094.0L1801.2 1089.7L1802.4 1079.4L1803.9 1083.4L1805.3 1094.0L1806.3 1088.0L1807.4 1082.6L1808.7 1078.1L1809.8 1080.3L1811.2 1092.1L1812.2 1090.4L1813.1 1082.1L1814.3 1081.9L1815.8 1084.5L1817.3 1087.8L1818.3 1093.5L1819.8 1078.0L1820.8 1081.1L1822.2 1086.4L1823.4 1093.8L1824.5 1090.5L1825.9 1083.4L1826.9 1087.7L1828.1 1094.0L1829.3 1091.2L1830.2 1091.2L1831.3 1085.7L1832.8 1088.0L1833.8 1094.0L1834.9 1091.7L1835.8 1089.5L1837.3 1078.6L1838.5 1089.4L1839.9 1093.9L1841.5 1080.8L1843.0 1084.3L1844.1 1086.6L1845.2 1091.3L1846.6 1083.6L1848.1 1079.1L1849.2 1089.6L1850.7 1087.9L1851.7 1083.6L1852.8 1080.2L1853.7 1084.4L1854.9 1090.9L1855.8 1088.9L1857.1 1082.6L1858.0 1081.2L1859.0 1089.4L1859.9 1089.1L1861.1 1087.7L1862.1 1083.0L1863.3 1082.7L1864.6 1086.7L1866.1 1092.7L1867.3 1087.7L1868.6 1079.0L1869.5 1083.3L1870.9 1090.7L1872.1 1093.6L1873.1 1085.5L1874.5 1081.3L1875.6 1080.1L1876.7 1091.1L1878.2 1091.1L1879.5 1077.7L1881.1 1082.4L1882.3 1091.5L1883.9 1085.1L1885.1 1082.3L1886.0 1078.7L1887.3 1083.6L1888.8 1087.5L1890.3 1087.9L1891.5 1076.9L1892.7 1075.2L1893.6 1089.7L1895.0 1089.6L1896.1 1090.9L1897.6 1082.3L1899.2 1081.2L1900.4 1091.2L1901.7 1093.9L1903.0 1085.7L1904.0 1077.4L1905.1 1083.2L1906.6 1092.3L1908.1 1088.8L1909.5 1078.6L1910.5 1088.2L1911.7 1089.4L1912.9 1091.8L1914.3 1085.0L1915.2 1076.2L1916.7 1087.9L1917.9 1091.1L1918.9 1092.4L1920.0 1082.7L1921.2 1077.3L1922.5 1092.5L1923.9 1087.8L1925.0 1082.5L1926.4 1082.2L1927.9 1088.0L1929.4 1084.3L1931.0 1074.3L1932.3 1083.1L1933.6 1089.2L1935.1 1084.6L1936.4 1076.6L1938.0 1090.9L1939.2 1094.0L1940.3 1082.7L1941.4 1079.8L1942.5 1087.6L1943.9 1094.0L1945.0 1088.0L1946.3 1081.3L1947.4 1080.2L1948.6 1092.1L1949.9 1094.0L1951.0 1083.0L1952.4 1080.0L1953.8 1093.0L1955.2 1089.4L1956.7 1085.2L1958.0 1078.1L1959.6 1089.2L1961.2 1089.8L1962.5 1081.3L1963.7 1076.8L1965.0 1083.4L1966.5 1087.0L1968.0 1085.1L1969.0 1081.4L1970.0 1079.3L1970.9 1085.5L1972.4 1089.5L1973.6 1089.7L1974.5 1080.4L1975.9 1086.6L1977.3 1093.5L1978.6 1093.6L1979.7 1088.9L1980.8 1079.3L1981.9 1088.8L1983.3 1089.7L1984.2 1094.0L1985.6 1087.3L1986.6 1094.0L1990.0 1094.6L2046.0 1094.4" fill="none" stroke="#4e79b3" stroke-width="1" stroke-linejoin="round"/>
<text x="552.0" y="1095" font-size="14" fill="#909090">09:00</text>
<text x="739.8" y="1095" font-size="14" fill="#909090">10:00</text>
<text x="924.9" y="1095" font-size="14" fill="#909090">11:00</text>
<text x="1113.9" y="1095" font-size="14" fill="#909090">12:00</text>
<text x="1301.6" y="1095" font-size="14" fill="#909090">13:00</text>
<text x="1489.1" y="1095" font-size="14" fill="#909090">14:00</text>
<text x="1676.3" y="1095" font-size="14" fill="#909090">15:00</text>
<text x="1863.4" y="1095" font-size="14" fill="#909090">16:00</text>
<text x="2049.7" y="1095" font-size="14" fill="#909090">17:00</text>
<text x="2236.3" y="1095" font-size="14" fill="#909090">18:00</text>
<path d="M531.4 1060V1099M611.3 1060V1099" stroke="#b2b1b6" stroke-width="1.2"/>
<rect x="412" y="1099" width="1836" height="14.5" fill="#ededed"/>
<rect x="531.5" y="1099" width="80" height="14.5" fill="#bfc8d1"/>
<path d="M531.5 1099V1113.5H611.5V1099" fill="none" stroke="#b2b1b6" stroke-width="1"/>
<path d="M568.5 1103V1110M571.5 1103V1110M574.5 1103V1110" stroke="#555" stroke-width="1"/>
<rect x="412.5" y="1099.5" width="14" height="14" fill="#ebe7e8" stroke="#bbb"/>
<path d="M421 1103.8L418 1107L421 1110.2Z" fill="#666"/>
<rect x="2233.5" y="1099.5" width="14" height="14" fill="#ebe7e8" stroke="#bbb"/>
<path d="M2239.6 1103.8L2242.6 1107L2239.6 1110.2Z" fill="#666"/>
<rect x="527.4" y="1071.5" width="8" height="15" fill="#ebe7e8" stroke="#b2b1b6"/>
<path d="M530.9 1075.5V1083M532.9 1075.5V1083" stroke="#999" stroke-width="1"/>
<rect x="607.3" y="1071.5" width="8" height="15" fill="#ebe7e8" stroke="#b2b1b6"/>
<path d="M610.8 1075.5V1083M612.8 1075.5V1083" stroke="#999" stroke-width="1"/>
<path d="M2323.28 456.14L2323.32 454.32L2326.58 454.32L2326.62 456.14L2327.84 456.64L2329.15 455.39L2331.46 457.70L2330.21 459.01L2330.71 460.23L2332.53 460.27L2332.53 463.53L2330.71 463.57L2330.21 464.79L2331.46 466.10L2329.15 468.41L2327.84 467.16L2326.62 467.66L2326.58 469.48L2323.32 469.48L2323.28 467.66L2322.06 467.16L2320.75 468.41L2318.44 466.10L2319.69 464.79L2319.19 463.57L2317.37 463.53L2317.37 460.27L2319.19 460.23L2319.69 459.01L2318.44 457.70L2320.75 455.39L2322.06 456.64Z" fill="none" stroke="#3c3c3c" stroke-width="1.1" stroke-linejoin="miter"/><circle cx="2324.95" cy="461.9" r="3" fill="none" stroke="#3c3c3c" stroke-width="1"/>
<path d="M2535.8 195 L2540.3 188.3 L2544.8 195 Z" fill="#8a8a8a" stroke="#8a8a8a" stroke-width="1" stroke-linejoin="round"/>
</svg>
<div class="abs save">Salva dati</div>
</body></html>
